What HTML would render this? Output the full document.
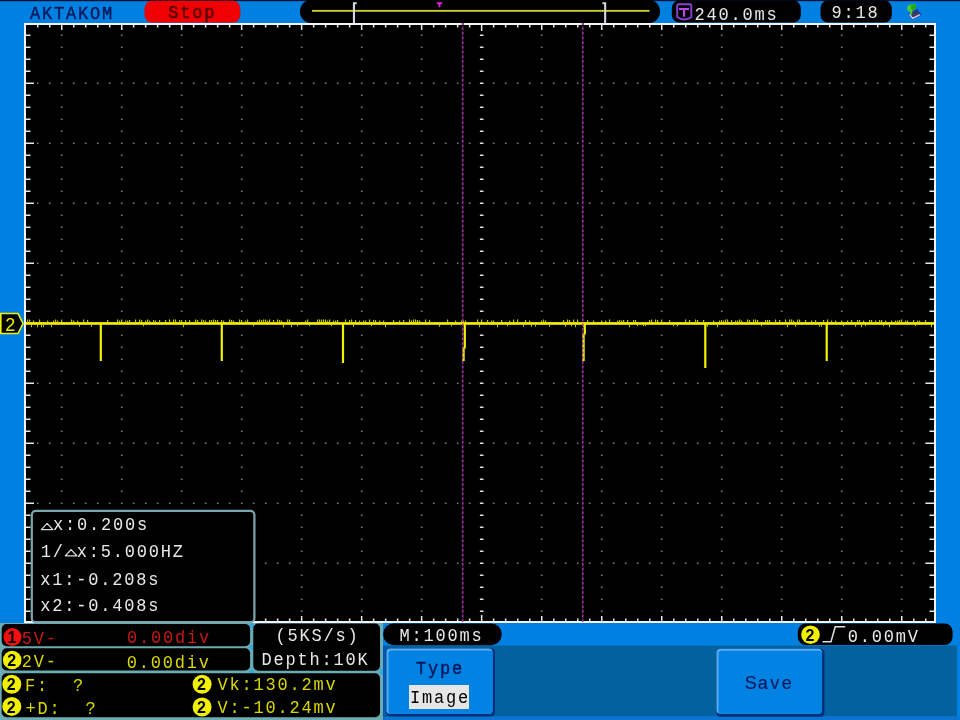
<!DOCTYPE html>
<html><head><meta charset="utf-8">
<style>
*{margin:0;padding:0;box-sizing:border-box}
html,body{width:960px;height:720px;overflow:hidden;background:#0080e0;}
body{position:relative;font-family:"Liberation Mono",monospace;}
.a{position:absolute}
.t{position:absolute;white-space:pre;font-family:"Liberation Mono",monospace;line-height:1;font-size:17px;letter-spacing:1.8px;transform:scaleY(1.08);transform-origin:0 50%}
.s{position:absolute;width:12px;text-align:center;font-family:"Liberation Sans",sans-serif;font-size:18px;line-height:20px;color:#001a5c;-webkit-text-stroke:0.15px #001a5c}
.c{position:absolute;width:20px;height:20px;line-height:20px;text-align:center;font-family:"Liberation Sans",sans-serif;font-size:16px;font-weight:bold;color:#000}
</style></head><body><div style="position:absolute;left:0;top:0;width:960px;height:720px;overflow:hidden;filter:blur(0.3px)">
<svg class="a" style="left:0;top:0" width="960" height="720" viewBox="0 0 960 720">
<rect x="0" y="0" width="960" height="1.2" fill="#001030"/>
<rect x="0" y="623" width="383" height="97" fill="#6aacb2"/>
<rect x="383" y="645.5" width="574" height="71" fill="#0262a0"/>
<rect x="383" y="716.5" width="577" height="3.5" fill="#0a74d0"/>
<rect x="24" y="23" width="912" height="600" fill="#f4f4f4"/>
<rect x="26" y="25" width="908" height="596" fill="#000"/>
<path d="M36.9 82.5h1.6v1.6h-1.6zM48.9 82.5h1.6v1.6h-1.6zM72.9 82.5h1.6v1.6h-1.6zM84.9 82.5h1.6v1.6h-1.6zM96.9 82.5h1.6v1.6h-1.6zM108.9 82.5h1.6v1.6h-1.6zM132.9 82.5h1.6v1.6h-1.6zM144.9 82.5h1.6v1.6h-1.6zM156.9 82.5h1.6v1.6h-1.6zM168.9 82.5h1.6v1.6h-1.6zM192.9 82.5h1.6v1.6h-1.6zM204.9 82.5h1.6v1.6h-1.6zM216.9 82.5h1.6v1.6h-1.6zM228.9 82.5h1.6v1.6h-1.6zM252.9 82.5h1.6v1.6h-1.6zM264.9 82.5h1.6v1.6h-1.6zM276.9 82.5h1.6v1.6h-1.6zM288.9 82.5h1.6v1.6h-1.6zM312.9 82.5h1.6v1.6h-1.6zM324.9 82.5h1.6v1.6h-1.6zM336.9 82.5h1.6v1.6h-1.6zM348.9 82.5h1.6v1.6h-1.6zM372.9 82.5h1.6v1.6h-1.6zM384.9 82.5h1.6v1.6h-1.6zM396.9 82.5h1.6v1.6h-1.6zM408.9 82.5h1.6v1.6h-1.6zM432.9 82.5h1.6v1.6h-1.6zM444.9 82.5h1.6v1.6h-1.6zM456.9 82.5h1.6v1.6h-1.6zM468.9 82.5h1.6v1.6h-1.6zM492.9 82.5h1.6v1.6h-1.6zM504.9 82.5h1.6v1.6h-1.6zM516.9 82.5h1.6v1.6h-1.6zM528.9 82.5h1.6v1.6h-1.6zM552.9 82.5h1.6v1.6h-1.6zM564.9 82.5h1.6v1.6h-1.6zM576.9 82.5h1.6v1.6h-1.6zM588.9 82.5h1.6v1.6h-1.6zM612.9 82.5h1.6v1.6h-1.6zM624.9 82.5h1.6v1.6h-1.6zM636.9 82.5h1.6v1.6h-1.6zM648.9 82.5h1.6v1.6h-1.6zM672.9 82.5h1.6v1.6h-1.6zM684.9 82.5h1.6v1.6h-1.6zM696.9 82.5h1.6v1.6h-1.6zM708.9 82.5h1.6v1.6h-1.6zM732.9 82.5h1.6v1.6h-1.6zM744.9 82.5h1.6v1.6h-1.6zM756.9 82.5h1.6v1.6h-1.6zM768.9 82.5h1.6v1.6h-1.6zM792.9 82.5h1.6v1.6h-1.6zM804.9 82.5h1.6v1.6h-1.6zM816.9 82.5h1.6v1.6h-1.6zM828.9 82.5h1.6v1.6h-1.6zM852.9 82.5h1.6v1.6h-1.6zM864.9 82.5h1.6v1.6h-1.6zM876.9 82.5h1.6v1.6h-1.6zM888.9 82.5h1.6v1.6h-1.6zM912.9 82.5h1.6v1.6h-1.6zM924.9 82.5h1.6v1.6h-1.6zM36.9 142.5h1.6v1.6h-1.6zM48.9 142.5h1.6v1.6h-1.6zM72.9 142.5h1.6v1.6h-1.6zM84.9 142.5h1.6v1.6h-1.6zM96.9 142.5h1.6v1.6h-1.6zM108.9 142.5h1.6v1.6h-1.6zM132.9 142.5h1.6v1.6h-1.6zM144.9 142.5h1.6v1.6h-1.6zM156.9 142.5h1.6v1.6h-1.6zM168.9 142.5h1.6v1.6h-1.6zM192.9 142.5h1.6v1.6h-1.6zM204.9 142.5h1.6v1.6h-1.6zM216.9 142.5h1.6v1.6h-1.6zM228.9 142.5h1.6v1.6h-1.6zM252.9 142.5h1.6v1.6h-1.6zM264.9 142.5h1.6v1.6h-1.6zM276.9 142.5h1.6v1.6h-1.6zM288.9 142.5h1.6v1.6h-1.6zM312.9 142.5h1.6v1.6h-1.6zM324.9 142.5h1.6v1.6h-1.6zM336.9 142.5h1.6v1.6h-1.6zM348.9 142.5h1.6v1.6h-1.6zM372.9 142.5h1.6v1.6h-1.6zM384.9 142.5h1.6v1.6h-1.6zM396.9 142.5h1.6v1.6h-1.6zM408.9 142.5h1.6v1.6h-1.6zM432.9 142.5h1.6v1.6h-1.6zM444.9 142.5h1.6v1.6h-1.6zM456.9 142.5h1.6v1.6h-1.6zM468.9 142.5h1.6v1.6h-1.6zM492.9 142.5h1.6v1.6h-1.6zM504.9 142.5h1.6v1.6h-1.6zM516.9 142.5h1.6v1.6h-1.6zM528.9 142.5h1.6v1.6h-1.6zM552.9 142.5h1.6v1.6h-1.6zM564.9 142.5h1.6v1.6h-1.6zM576.9 142.5h1.6v1.6h-1.6zM588.9 142.5h1.6v1.6h-1.6zM612.9 142.5h1.6v1.6h-1.6zM624.9 142.5h1.6v1.6h-1.6zM636.9 142.5h1.6v1.6h-1.6zM648.9 142.5h1.6v1.6h-1.6zM672.9 142.5h1.6v1.6h-1.6zM684.9 142.5h1.6v1.6h-1.6zM696.9 142.5h1.6v1.6h-1.6zM708.9 142.5h1.6v1.6h-1.6zM732.9 142.5h1.6v1.6h-1.6zM744.9 142.5h1.6v1.6h-1.6zM756.9 142.5h1.6v1.6h-1.6zM768.9 142.5h1.6v1.6h-1.6zM792.9 142.5h1.6v1.6h-1.6zM804.9 142.5h1.6v1.6h-1.6zM816.9 142.5h1.6v1.6h-1.6zM828.9 142.5h1.6v1.6h-1.6zM852.9 142.5h1.6v1.6h-1.6zM864.9 142.5h1.6v1.6h-1.6zM876.9 142.5h1.6v1.6h-1.6zM888.9 142.5h1.6v1.6h-1.6zM912.9 142.5h1.6v1.6h-1.6zM924.9 142.5h1.6v1.6h-1.6zM36.9 202.5h1.6v1.6h-1.6zM48.9 202.5h1.6v1.6h-1.6zM72.9 202.5h1.6v1.6h-1.6zM84.9 202.5h1.6v1.6h-1.6zM96.9 202.5h1.6v1.6h-1.6zM108.9 202.5h1.6v1.6h-1.6zM132.9 202.5h1.6v1.6h-1.6zM144.9 202.5h1.6v1.6h-1.6zM156.9 202.5h1.6v1.6h-1.6zM168.9 202.5h1.6v1.6h-1.6zM192.9 202.5h1.6v1.6h-1.6zM204.9 202.5h1.6v1.6h-1.6zM216.9 202.5h1.6v1.6h-1.6zM228.9 202.5h1.6v1.6h-1.6zM252.9 202.5h1.6v1.6h-1.6zM264.9 202.5h1.6v1.6h-1.6zM276.9 202.5h1.6v1.6h-1.6zM288.9 202.5h1.6v1.6h-1.6zM312.9 202.5h1.6v1.6h-1.6zM324.9 202.5h1.6v1.6h-1.6zM336.9 202.5h1.6v1.6h-1.6zM348.9 202.5h1.6v1.6h-1.6zM372.9 202.5h1.6v1.6h-1.6zM384.9 202.5h1.6v1.6h-1.6zM396.9 202.5h1.6v1.6h-1.6zM408.9 202.5h1.6v1.6h-1.6zM432.9 202.5h1.6v1.6h-1.6zM444.9 202.5h1.6v1.6h-1.6zM456.9 202.5h1.6v1.6h-1.6zM468.9 202.5h1.6v1.6h-1.6zM492.9 202.5h1.6v1.6h-1.6zM504.9 202.5h1.6v1.6h-1.6zM516.9 202.5h1.6v1.6h-1.6zM528.9 202.5h1.6v1.6h-1.6zM552.9 202.5h1.6v1.6h-1.6zM564.9 202.5h1.6v1.6h-1.6zM576.9 202.5h1.6v1.6h-1.6zM588.9 202.5h1.6v1.6h-1.6zM612.9 202.5h1.6v1.6h-1.6zM624.9 202.5h1.6v1.6h-1.6zM636.9 202.5h1.6v1.6h-1.6zM648.9 202.5h1.6v1.6h-1.6zM672.9 202.5h1.6v1.6h-1.6zM684.9 202.5h1.6v1.6h-1.6zM696.9 202.5h1.6v1.6h-1.6zM708.9 202.5h1.6v1.6h-1.6zM732.9 202.5h1.6v1.6h-1.6zM744.9 202.5h1.6v1.6h-1.6zM756.9 202.5h1.6v1.6h-1.6zM768.9 202.5h1.6v1.6h-1.6zM792.9 202.5h1.6v1.6h-1.6zM804.9 202.5h1.6v1.6h-1.6zM816.9 202.5h1.6v1.6h-1.6zM828.9 202.5h1.6v1.6h-1.6zM852.9 202.5h1.6v1.6h-1.6zM864.9 202.5h1.6v1.6h-1.6zM876.9 202.5h1.6v1.6h-1.6zM888.9 202.5h1.6v1.6h-1.6zM912.9 202.5h1.6v1.6h-1.6zM924.9 202.5h1.6v1.6h-1.6zM36.9 262.5h1.6v1.6h-1.6zM48.9 262.5h1.6v1.6h-1.6zM72.9 262.5h1.6v1.6h-1.6zM84.9 262.5h1.6v1.6h-1.6zM96.9 262.5h1.6v1.6h-1.6zM108.9 262.5h1.6v1.6h-1.6zM132.9 262.5h1.6v1.6h-1.6zM144.9 262.5h1.6v1.6h-1.6zM156.9 262.5h1.6v1.6h-1.6zM168.9 262.5h1.6v1.6h-1.6zM192.9 262.5h1.6v1.6h-1.6zM204.9 262.5h1.6v1.6h-1.6zM216.9 262.5h1.6v1.6h-1.6zM228.9 262.5h1.6v1.6h-1.6zM252.9 262.5h1.6v1.6h-1.6zM264.9 262.5h1.6v1.6h-1.6zM276.9 262.5h1.6v1.6h-1.6zM288.9 262.5h1.6v1.6h-1.6zM312.9 262.5h1.6v1.6h-1.6zM324.9 262.5h1.6v1.6h-1.6zM336.9 262.5h1.6v1.6h-1.6zM348.9 262.5h1.6v1.6h-1.6zM372.9 262.5h1.6v1.6h-1.6zM384.9 262.5h1.6v1.6h-1.6zM396.9 262.5h1.6v1.6h-1.6zM408.9 262.5h1.6v1.6h-1.6zM432.9 262.5h1.6v1.6h-1.6zM444.9 262.5h1.6v1.6h-1.6zM456.9 262.5h1.6v1.6h-1.6zM468.9 262.5h1.6v1.6h-1.6zM492.9 262.5h1.6v1.6h-1.6zM504.9 262.5h1.6v1.6h-1.6zM516.9 262.5h1.6v1.6h-1.6zM528.9 262.5h1.6v1.6h-1.6zM552.9 262.5h1.6v1.6h-1.6zM564.9 262.5h1.6v1.6h-1.6zM576.9 262.5h1.6v1.6h-1.6zM588.9 262.5h1.6v1.6h-1.6zM612.9 262.5h1.6v1.6h-1.6zM624.9 262.5h1.6v1.6h-1.6zM636.9 262.5h1.6v1.6h-1.6zM648.9 262.5h1.6v1.6h-1.6zM672.9 262.5h1.6v1.6h-1.6zM684.9 262.5h1.6v1.6h-1.6zM696.9 262.5h1.6v1.6h-1.6zM708.9 262.5h1.6v1.6h-1.6zM732.9 262.5h1.6v1.6h-1.6zM744.9 262.5h1.6v1.6h-1.6zM756.9 262.5h1.6v1.6h-1.6zM768.9 262.5h1.6v1.6h-1.6zM792.9 262.5h1.6v1.6h-1.6zM804.9 262.5h1.6v1.6h-1.6zM816.9 262.5h1.6v1.6h-1.6zM828.9 262.5h1.6v1.6h-1.6zM852.9 262.5h1.6v1.6h-1.6zM864.9 262.5h1.6v1.6h-1.6zM876.9 262.5h1.6v1.6h-1.6zM888.9 262.5h1.6v1.6h-1.6zM912.9 262.5h1.6v1.6h-1.6zM924.9 262.5h1.6v1.6h-1.6zM36.9 382.5h1.6v1.6h-1.6zM48.9 382.5h1.6v1.6h-1.6zM72.9 382.5h1.6v1.6h-1.6zM84.9 382.5h1.6v1.6h-1.6zM96.9 382.5h1.6v1.6h-1.6zM108.9 382.5h1.6v1.6h-1.6zM132.9 382.5h1.6v1.6h-1.6zM144.9 382.5h1.6v1.6h-1.6zM156.9 382.5h1.6v1.6h-1.6zM168.9 382.5h1.6v1.6h-1.6zM192.9 382.5h1.6v1.6h-1.6zM204.9 382.5h1.6v1.6h-1.6zM216.9 382.5h1.6v1.6h-1.6zM228.9 382.5h1.6v1.6h-1.6zM252.9 382.5h1.6v1.6h-1.6zM264.9 382.5h1.6v1.6h-1.6zM276.9 382.5h1.6v1.6h-1.6zM288.9 382.5h1.6v1.6h-1.6zM312.9 382.5h1.6v1.6h-1.6zM324.9 382.5h1.6v1.6h-1.6zM336.9 382.5h1.6v1.6h-1.6zM348.9 382.5h1.6v1.6h-1.6zM372.9 382.5h1.6v1.6h-1.6zM384.9 382.5h1.6v1.6h-1.6zM396.9 382.5h1.6v1.6h-1.6zM408.9 382.5h1.6v1.6h-1.6zM432.9 382.5h1.6v1.6h-1.6zM444.9 382.5h1.6v1.6h-1.6zM456.9 382.5h1.6v1.6h-1.6zM468.9 382.5h1.6v1.6h-1.6zM492.9 382.5h1.6v1.6h-1.6zM504.9 382.5h1.6v1.6h-1.6zM516.9 382.5h1.6v1.6h-1.6zM528.9 382.5h1.6v1.6h-1.6zM552.9 382.5h1.6v1.6h-1.6zM564.9 382.5h1.6v1.6h-1.6zM576.9 382.5h1.6v1.6h-1.6zM588.9 382.5h1.6v1.6h-1.6zM612.9 382.5h1.6v1.6h-1.6zM624.9 382.5h1.6v1.6h-1.6zM636.9 382.5h1.6v1.6h-1.6zM648.9 382.5h1.6v1.6h-1.6zM672.9 382.5h1.6v1.6h-1.6zM684.9 382.5h1.6v1.6h-1.6zM696.9 382.5h1.6v1.6h-1.6zM708.9 382.5h1.6v1.6h-1.6zM732.9 382.5h1.6v1.6h-1.6zM744.9 382.5h1.6v1.6h-1.6zM756.9 382.5h1.6v1.6h-1.6zM768.9 382.5h1.6v1.6h-1.6zM792.9 382.5h1.6v1.6h-1.6zM804.9 382.5h1.6v1.6h-1.6zM816.9 382.5h1.6v1.6h-1.6zM828.9 382.5h1.6v1.6h-1.6zM852.9 382.5h1.6v1.6h-1.6zM864.9 382.5h1.6v1.6h-1.6zM876.9 382.5h1.6v1.6h-1.6zM888.9 382.5h1.6v1.6h-1.6zM912.9 382.5h1.6v1.6h-1.6zM924.9 382.5h1.6v1.6h-1.6zM36.9 442.5h1.6v1.6h-1.6zM48.9 442.5h1.6v1.6h-1.6zM72.9 442.5h1.6v1.6h-1.6zM84.9 442.5h1.6v1.6h-1.6zM96.9 442.5h1.6v1.6h-1.6zM108.9 442.5h1.6v1.6h-1.6zM132.9 442.5h1.6v1.6h-1.6zM144.9 442.5h1.6v1.6h-1.6zM156.9 442.5h1.6v1.6h-1.6zM168.9 442.5h1.6v1.6h-1.6zM192.9 442.5h1.6v1.6h-1.6zM204.9 442.5h1.6v1.6h-1.6zM216.9 442.5h1.6v1.6h-1.6zM228.9 442.5h1.6v1.6h-1.6zM252.9 442.5h1.6v1.6h-1.6zM264.9 442.5h1.6v1.6h-1.6zM276.9 442.5h1.6v1.6h-1.6zM288.9 442.5h1.6v1.6h-1.6zM312.9 442.5h1.6v1.6h-1.6zM324.9 442.5h1.6v1.6h-1.6zM336.9 442.5h1.6v1.6h-1.6zM348.9 442.5h1.6v1.6h-1.6zM372.9 442.5h1.6v1.6h-1.6zM384.9 442.5h1.6v1.6h-1.6zM396.9 442.5h1.6v1.6h-1.6zM408.9 442.5h1.6v1.6h-1.6zM432.9 442.5h1.6v1.6h-1.6zM444.9 442.5h1.6v1.6h-1.6zM456.9 442.5h1.6v1.6h-1.6zM468.9 442.5h1.6v1.6h-1.6zM492.9 442.5h1.6v1.6h-1.6zM504.9 442.5h1.6v1.6h-1.6zM516.9 442.5h1.6v1.6h-1.6zM528.9 442.5h1.6v1.6h-1.6zM552.9 442.5h1.6v1.6h-1.6zM564.9 442.5h1.6v1.6h-1.6zM576.9 442.5h1.6v1.6h-1.6zM588.9 442.5h1.6v1.6h-1.6zM612.9 442.5h1.6v1.6h-1.6zM624.9 442.5h1.6v1.6h-1.6zM636.9 442.5h1.6v1.6h-1.6zM648.9 442.5h1.6v1.6h-1.6zM672.9 442.5h1.6v1.6h-1.6zM684.9 442.5h1.6v1.6h-1.6zM696.9 442.5h1.6v1.6h-1.6zM708.9 442.5h1.6v1.6h-1.6zM732.9 442.5h1.6v1.6h-1.6zM744.9 442.5h1.6v1.6h-1.6zM756.9 442.5h1.6v1.6h-1.6zM768.9 442.5h1.6v1.6h-1.6zM792.9 442.5h1.6v1.6h-1.6zM804.9 442.5h1.6v1.6h-1.6zM816.9 442.5h1.6v1.6h-1.6zM828.9 442.5h1.6v1.6h-1.6zM852.9 442.5h1.6v1.6h-1.6zM864.9 442.5h1.6v1.6h-1.6zM876.9 442.5h1.6v1.6h-1.6zM888.9 442.5h1.6v1.6h-1.6zM912.9 442.5h1.6v1.6h-1.6zM924.9 442.5h1.6v1.6h-1.6zM36.9 502.5h1.6v1.6h-1.6zM48.9 502.5h1.6v1.6h-1.6zM72.9 502.5h1.6v1.6h-1.6zM84.9 502.5h1.6v1.6h-1.6zM96.9 502.5h1.6v1.6h-1.6zM108.9 502.5h1.6v1.6h-1.6zM132.9 502.5h1.6v1.6h-1.6zM144.9 502.5h1.6v1.6h-1.6zM156.9 502.5h1.6v1.6h-1.6zM168.9 502.5h1.6v1.6h-1.6zM192.9 502.5h1.6v1.6h-1.6zM204.9 502.5h1.6v1.6h-1.6zM216.9 502.5h1.6v1.6h-1.6zM228.9 502.5h1.6v1.6h-1.6zM252.9 502.5h1.6v1.6h-1.6zM264.9 502.5h1.6v1.6h-1.6zM276.9 502.5h1.6v1.6h-1.6zM288.9 502.5h1.6v1.6h-1.6zM312.9 502.5h1.6v1.6h-1.6zM324.9 502.5h1.6v1.6h-1.6zM336.9 502.5h1.6v1.6h-1.6zM348.9 502.5h1.6v1.6h-1.6zM372.9 502.5h1.6v1.6h-1.6zM384.9 502.5h1.6v1.6h-1.6zM396.9 502.5h1.6v1.6h-1.6zM408.9 502.5h1.6v1.6h-1.6zM432.9 502.5h1.6v1.6h-1.6zM444.9 502.5h1.6v1.6h-1.6zM456.9 502.5h1.6v1.6h-1.6zM468.9 502.5h1.6v1.6h-1.6zM492.9 502.5h1.6v1.6h-1.6zM504.9 502.5h1.6v1.6h-1.6zM516.9 502.5h1.6v1.6h-1.6zM528.9 502.5h1.6v1.6h-1.6zM552.9 502.5h1.6v1.6h-1.6zM564.9 502.5h1.6v1.6h-1.6zM576.9 502.5h1.6v1.6h-1.6zM588.9 502.5h1.6v1.6h-1.6zM612.9 502.5h1.6v1.6h-1.6zM624.9 502.5h1.6v1.6h-1.6zM636.9 502.5h1.6v1.6h-1.6zM648.9 502.5h1.6v1.6h-1.6zM672.9 502.5h1.6v1.6h-1.6zM684.9 502.5h1.6v1.6h-1.6zM696.9 502.5h1.6v1.6h-1.6zM708.9 502.5h1.6v1.6h-1.6zM732.9 502.5h1.6v1.6h-1.6zM744.9 502.5h1.6v1.6h-1.6zM756.9 502.5h1.6v1.6h-1.6zM768.9 502.5h1.6v1.6h-1.6zM792.9 502.5h1.6v1.6h-1.6zM804.9 502.5h1.6v1.6h-1.6zM816.9 502.5h1.6v1.6h-1.6zM828.9 502.5h1.6v1.6h-1.6zM852.9 502.5h1.6v1.6h-1.6zM864.9 502.5h1.6v1.6h-1.6zM876.9 502.5h1.6v1.6h-1.6zM888.9 502.5h1.6v1.6h-1.6zM912.9 502.5h1.6v1.6h-1.6zM924.9 502.5h1.6v1.6h-1.6zM36.9 562.5h1.6v1.6h-1.6zM48.9 562.5h1.6v1.6h-1.6zM72.9 562.5h1.6v1.6h-1.6zM84.9 562.5h1.6v1.6h-1.6zM96.9 562.5h1.6v1.6h-1.6zM108.9 562.5h1.6v1.6h-1.6zM132.9 562.5h1.6v1.6h-1.6zM144.9 562.5h1.6v1.6h-1.6zM156.9 562.5h1.6v1.6h-1.6zM168.9 562.5h1.6v1.6h-1.6zM192.9 562.5h1.6v1.6h-1.6zM204.9 562.5h1.6v1.6h-1.6zM216.9 562.5h1.6v1.6h-1.6zM228.9 562.5h1.6v1.6h-1.6zM252.9 562.5h1.6v1.6h-1.6zM264.9 562.5h1.6v1.6h-1.6zM276.9 562.5h1.6v1.6h-1.6zM288.9 562.5h1.6v1.6h-1.6zM312.9 562.5h1.6v1.6h-1.6zM324.9 562.5h1.6v1.6h-1.6zM336.9 562.5h1.6v1.6h-1.6zM348.9 562.5h1.6v1.6h-1.6zM372.9 562.5h1.6v1.6h-1.6zM384.9 562.5h1.6v1.6h-1.6zM396.9 562.5h1.6v1.6h-1.6zM408.9 562.5h1.6v1.6h-1.6zM432.9 562.5h1.6v1.6h-1.6zM444.9 562.5h1.6v1.6h-1.6zM456.9 562.5h1.6v1.6h-1.6zM468.9 562.5h1.6v1.6h-1.6zM492.9 562.5h1.6v1.6h-1.6zM504.9 562.5h1.6v1.6h-1.6zM516.9 562.5h1.6v1.6h-1.6zM528.9 562.5h1.6v1.6h-1.6zM552.9 562.5h1.6v1.6h-1.6zM564.9 562.5h1.6v1.6h-1.6zM576.9 562.5h1.6v1.6h-1.6zM588.9 562.5h1.6v1.6h-1.6zM612.9 562.5h1.6v1.6h-1.6zM624.9 562.5h1.6v1.6h-1.6zM636.9 562.5h1.6v1.6h-1.6zM648.9 562.5h1.6v1.6h-1.6zM672.9 562.5h1.6v1.6h-1.6zM684.9 562.5h1.6v1.6h-1.6zM696.9 562.5h1.6v1.6h-1.6zM708.9 562.5h1.6v1.6h-1.6zM732.9 562.5h1.6v1.6h-1.6zM744.9 562.5h1.6v1.6h-1.6zM756.9 562.5h1.6v1.6h-1.6zM768.9 562.5h1.6v1.6h-1.6zM792.9 562.5h1.6v1.6h-1.6zM804.9 562.5h1.6v1.6h-1.6zM816.9 562.5h1.6v1.6h-1.6zM828.9 562.5h1.6v1.6h-1.6zM852.9 562.5h1.6v1.6h-1.6zM864.9 562.5h1.6v1.6h-1.6zM876.9 562.5h1.6v1.6h-1.6zM888.9 562.5h1.6v1.6h-1.6zM912.9 562.5h1.6v1.6h-1.6zM924.9 562.5h1.6v1.6h-1.6zM60.9 34.5h1.6v1.6h-1.6zM60.9 46.5h1.6v1.6h-1.6zM60.9 58.5h1.6v1.6h-1.6zM60.9 70.5h1.6v1.6h-1.6zM60.9 82.5h1.6v1.6h-1.6zM60.9 94.5h1.6v1.6h-1.6zM60.9 106.5h1.6v1.6h-1.6zM60.9 118.5h1.6v1.6h-1.6zM60.9 130.5h1.6v1.6h-1.6zM60.9 142.5h1.6v1.6h-1.6zM60.9 154.5h1.6v1.6h-1.6zM60.9 166.5h1.6v1.6h-1.6zM60.9 178.5h1.6v1.6h-1.6zM60.9 190.5h1.6v1.6h-1.6zM60.9 202.5h1.6v1.6h-1.6zM60.9 214.5h1.6v1.6h-1.6zM60.9 226.5h1.6v1.6h-1.6zM60.9 238.5h1.6v1.6h-1.6zM60.9 250.5h1.6v1.6h-1.6zM60.9 262.5h1.6v1.6h-1.6zM60.9 274.5h1.6v1.6h-1.6zM60.9 286.5h1.6v1.6h-1.6zM60.9 298.5h1.6v1.6h-1.6zM60.9 310.5h1.6v1.6h-1.6zM60.9 322.5h1.6v1.6h-1.6zM60.9 334.5h1.6v1.6h-1.6zM60.9 346.5h1.6v1.6h-1.6zM60.9 358.5h1.6v1.6h-1.6zM60.9 370.5h1.6v1.6h-1.6zM60.9 382.5h1.6v1.6h-1.6zM60.9 394.5h1.6v1.6h-1.6zM60.9 406.5h1.6v1.6h-1.6zM60.9 418.5h1.6v1.6h-1.6zM60.9 430.5h1.6v1.6h-1.6zM60.9 442.5h1.6v1.6h-1.6zM60.9 454.5h1.6v1.6h-1.6zM60.9 466.5h1.6v1.6h-1.6zM60.9 478.5h1.6v1.6h-1.6zM60.9 490.5h1.6v1.6h-1.6zM60.9 502.5h1.6v1.6h-1.6zM60.9 514.5h1.6v1.6h-1.6zM60.9 526.5h1.6v1.6h-1.6zM60.9 538.5h1.6v1.6h-1.6zM60.9 550.5h1.6v1.6h-1.6zM60.9 562.5h1.6v1.6h-1.6zM60.9 574.5h1.6v1.6h-1.6zM60.9 586.5h1.6v1.6h-1.6zM60.9 598.5h1.6v1.6h-1.6zM60.9 610.5h1.6v1.6h-1.6zM120.9 34.5h1.6v1.6h-1.6zM120.9 46.5h1.6v1.6h-1.6zM120.9 58.5h1.6v1.6h-1.6zM120.9 70.5h1.6v1.6h-1.6zM120.9 82.5h1.6v1.6h-1.6zM120.9 94.5h1.6v1.6h-1.6zM120.9 106.5h1.6v1.6h-1.6zM120.9 118.5h1.6v1.6h-1.6zM120.9 130.5h1.6v1.6h-1.6zM120.9 142.5h1.6v1.6h-1.6zM120.9 154.5h1.6v1.6h-1.6zM120.9 166.5h1.6v1.6h-1.6zM120.9 178.5h1.6v1.6h-1.6zM120.9 190.5h1.6v1.6h-1.6zM120.9 202.5h1.6v1.6h-1.6zM120.9 214.5h1.6v1.6h-1.6zM120.9 226.5h1.6v1.6h-1.6zM120.9 238.5h1.6v1.6h-1.6zM120.9 250.5h1.6v1.6h-1.6zM120.9 262.5h1.6v1.6h-1.6zM120.9 274.5h1.6v1.6h-1.6zM120.9 286.5h1.6v1.6h-1.6zM120.9 298.5h1.6v1.6h-1.6zM120.9 310.5h1.6v1.6h-1.6zM120.9 322.5h1.6v1.6h-1.6zM120.9 334.5h1.6v1.6h-1.6zM120.9 346.5h1.6v1.6h-1.6zM120.9 358.5h1.6v1.6h-1.6zM120.9 370.5h1.6v1.6h-1.6zM120.9 382.5h1.6v1.6h-1.6zM120.9 394.5h1.6v1.6h-1.6zM120.9 406.5h1.6v1.6h-1.6zM120.9 418.5h1.6v1.6h-1.6zM120.9 430.5h1.6v1.6h-1.6zM120.9 442.5h1.6v1.6h-1.6zM120.9 454.5h1.6v1.6h-1.6zM120.9 466.5h1.6v1.6h-1.6zM120.9 478.5h1.6v1.6h-1.6zM120.9 490.5h1.6v1.6h-1.6zM120.9 502.5h1.6v1.6h-1.6zM120.9 514.5h1.6v1.6h-1.6zM120.9 526.5h1.6v1.6h-1.6zM120.9 538.5h1.6v1.6h-1.6zM120.9 550.5h1.6v1.6h-1.6zM120.9 562.5h1.6v1.6h-1.6zM120.9 574.5h1.6v1.6h-1.6zM120.9 586.5h1.6v1.6h-1.6zM120.9 598.5h1.6v1.6h-1.6zM120.9 610.5h1.6v1.6h-1.6zM180.9 34.5h1.6v1.6h-1.6zM180.9 46.5h1.6v1.6h-1.6zM180.9 58.5h1.6v1.6h-1.6zM180.9 70.5h1.6v1.6h-1.6zM180.9 82.5h1.6v1.6h-1.6zM180.9 94.5h1.6v1.6h-1.6zM180.9 106.5h1.6v1.6h-1.6zM180.9 118.5h1.6v1.6h-1.6zM180.9 130.5h1.6v1.6h-1.6zM180.9 142.5h1.6v1.6h-1.6zM180.9 154.5h1.6v1.6h-1.6zM180.9 166.5h1.6v1.6h-1.6zM180.9 178.5h1.6v1.6h-1.6zM180.9 190.5h1.6v1.6h-1.6zM180.9 202.5h1.6v1.6h-1.6zM180.9 214.5h1.6v1.6h-1.6zM180.9 226.5h1.6v1.6h-1.6zM180.9 238.5h1.6v1.6h-1.6zM180.9 250.5h1.6v1.6h-1.6zM180.9 262.5h1.6v1.6h-1.6zM180.9 274.5h1.6v1.6h-1.6zM180.9 286.5h1.6v1.6h-1.6zM180.9 298.5h1.6v1.6h-1.6zM180.9 310.5h1.6v1.6h-1.6zM180.9 322.5h1.6v1.6h-1.6zM180.9 334.5h1.6v1.6h-1.6zM180.9 346.5h1.6v1.6h-1.6zM180.9 358.5h1.6v1.6h-1.6zM180.9 370.5h1.6v1.6h-1.6zM180.9 382.5h1.6v1.6h-1.6zM180.9 394.5h1.6v1.6h-1.6zM180.9 406.5h1.6v1.6h-1.6zM180.9 418.5h1.6v1.6h-1.6zM180.9 430.5h1.6v1.6h-1.6zM180.9 442.5h1.6v1.6h-1.6zM180.9 454.5h1.6v1.6h-1.6zM180.9 466.5h1.6v1.6h-1.6zM180.9 478.5h1.6v1.6h-1.6zM180.9 490.5h1.6v1.6h-1.6zM180.9 502.5h1.6v1.6h-1.6zM180.9 514.5h1.6v1.6h-1.6zM180.9 526.5h1.6v1.6h-1.6zM180.9 538.5h1.6v1.6h-1.6zM180.9 550.5h1.6v1.6h-1.6zM180.9 562.5h1.6v1.6h-1.6zM180.9 574.5h1.6v1.6h-1.6zM180.9 586.5h1.6v1.6h-1.6zM180.9 598.5h1.6v1.6h-1.6zM180.9 610.5h1.6v1.6h-1.6zM240.9 34.5h1.6v1.6h-1.6zM240.9 46.5h1.6v1.6h-1.6zM240.9 58.5h1.6v1.6h-1.6zM240.9 70.5h1.6v1.6h-1.6zM240.9 82.5h1.6v1.6h-1.6zM240.9 94.5h1.6v1.6h-1.6zM240.9 106.5h1.6v1.6h-1.6zM240.9 118.5h1.6v1.6h-1.6zM240.9 130.5h1.6v1.6h-1.6zM240.9 142.5h1.6v1.6h-1.6zM240.9 154.5h1.6v1.6h-1.6zM240.9 166.5h1.6v1.6h-1.6zM240.9 178.5h1.6v1.6h-1.6zM240.9 190.5h1.6v1.6h-1.6zM240.9 202.5h1.6v1.6h-1.6zM240.9 214.5h1.6v1.6h-1.6zM240.9 226.5h1.6v1.6h-1.6zM240.9 238.5h1.6v1.6h-1.6zM240.9 250.5h1.6v1.6h-1.6zM240.9 262.5h1.6v1.6h-1.6zM240.9 274.5h1.6v1.6h-1.6zM240.9 286.5h1.6v1.6h-1.6zM240.9 298.5h1.6v1.6h-1.6zM240.9 310.5h1.6v1.6h-1.6zM240.9 322.5h1.6v1.6h-1.6zM240.9 334.5h1.6v1.6h-1.6zM240.9 346.5h1.6v1.6h-1.6zM240.9 358.5h1.6v1.6h-1.6zM240.9 370.5h1.6v1.6h-1.6zM240.9 382.5h1.6v1.6h-1.6zM240.9 394.5h1.6v1.6h-1.6zM240.9 406.5h1.6v1.6h-1.6zM240.9 418.5h1.6v1.6h-1.6zM240.9 430.5h1.6v1.6h-1.6zM240.9 442.5h1.6v1.6h-1.6zM240.9 454.5h1.6v1.6h-1.6zM240.9 466.5h1.6v1.6h-1.6zM240.9 478.5h1.6v1.6h-1.6zM240.9 490.5h1.6v1.6h-1.6zM240.9 502.5h1.6v1.6h-1.6zM240.9 514.5h1.6v1.6h-1.6zM240.9 526.5h1.6v1.6h-1.6zM240.9 538.5h1.6v1.6h-1.6zM240.9 550.5h1.6v1.6h-1.6zM240.9 562.5h1.6v1.6h-1.6zM240.9 574.5h1.6v1.6h-1.6zM240.9 586.5h1.6v1.6h-1.6zM240.9 598.5h1.6v1.6h-1.6zM240.9 610.5h1.6v1.6h-1.6zM300.9 34.5h1.6v1.6h-1.6zM300.9 46.5h1.6v1.6h-1.6zM300.9 58.5h1.6v1.6h-1.6zM300.9 70.5h1.6v1.6h-1.6zM300.9 82.5h1.6v1.6h-1.6zM300.9 94.5h1.6v1.6h-1.6zM300.9 106.5h1.6v1.6h-1.6zM300.9 118.5h1.6v1.6h-1.6zM300.9 130.5h1.6v1.6h-1.6zM300.9 142.5h1.6v1.6h-1.6zM300.9 154.5h1.6v1.6h-1.6zM300.9 166.5h1.6v1.6h-1.6zM300.9 178.5h1.6v1.6h-1.6zM300.9 190.5h1.6v1.6h-1.6zM300.9 202.5h1.6v1.6h-1.6zM300.9 214.5h1.6v1.6h-1.6zM300.9 226.5h1.6v1.6h-1.6zM300.9 238.5h1.6v1.6h-1.6zM300.9 250.5h1.6v1.6h-1.6zM300.9 262.5h1.6v1.6h-1.6zM300.9 274.5h1.6v1.6h-1.6zM300.9 286.5h1.6v1.6h-1.6zM300.9 298.5h1.6v1.6h-1.6zM300.9 310.5h1.6v1.6h-1.6zM300.9 322.5h1.6v1.6h-1.6zM300.9 334.5h1.6v1.6h-1.6zM300.9 346.5h1.6v1.6h-1.6zM300.9 358.5h1.6v1.6h-1.6zM300.9 370.5h1.6v1.6h-1.6zM300.9 382.5h1.6v1.6h-1.6zM300.9 394.5h1.6v1.6h-1.6zM300.9 406.5h1.6v1.6h-1.6zM300.9 418.5h1.6v1.6h-1.6zM300.9 430.5h1.6v1.6h-1.6zM300.9 442.5h1.6v1.6h-1.6zM300.9 454.5h1.6v1.6h-1.6zM300.9 466.5h1.6v1.6h-1.6zM300.9 478.5h1.6v1.6h-1.6zM300.9 490.5h1.6v1.6h-1.6zM300.9 502.5h1.6v1.6h-1.6zM300.9 514.5h1.6v1.6h-1.6zM300.9 526.5h1.6v1.6h-1.6zM300.9 538.5h1.6v1.6h-1.6zM300.9 550.5h1.6v1.6h-1.6zM300.9 562.5h1.6v1.6h-1.6zM300.9 574.5h1.6v1.6h-1.6zM300.9 586.5h1.6v1.6h-1.6zM300.9 598.5h1.6v1.6h-1.6zM300.9 610.5h1.6v1.6h-1.6zM360.9 34.5h1.6v1.6h-1.6zM360.9 46.5h1.6v1.6h-1.6zM360.9 58.5h1.6v1.6h-1.6zM360.9 70.5h1.6v1.6h-1.6zM360.9 82.5h1.6v1.6h-1.6zM360.9 94.5h1.6v1.6h-1.6zM360.9 106.5h1.6v1.6h-1.6zM360.9 118.5h1.6v1.6h-1.6zM360.9 130.5h1.6v1.6h-1.6zM360.9 142.5h1.6v1.6h-1.6zM360.9 154.5h1.6v1.6h-1.6zM360.9 166.5h1.6v1.6h-1.6zM360.9 178.5h1.6v1.6h-1.6zM360.9 190.5h1.6v1.6h-1.6zM360.9 202.5h1.6v1.6h-1.6zM360.9 214.5h1.6v1.6h-1.6zM360.9 226.5h1.6v1.6h-1.6zM360.9 238.5h1.6v1.6h-1.6zM360.9 250.5h1.6v1.6h-1.6zM360.9 262.5h1.6v1.6h-1.6zM360.9 274.5h1.6v1.6h-1.6zM360.9 286.5h1.6v1.6h-1.6zM360.9 298.5h1.6v1.6h-1.6zM360.9 310.5h1.6v1.6h-1.6zM360.9 322.5h1.6v1.6h-1.6zM360.9 334.5h1.6v1.6h-1.6zM360.9 346.5h1.6v1.6h-1.6zM360.9 358.5h1.6v1.6h-1.6zM360.9 370.5h1.6v1.6h-1.6zM360.9 382.5h1.6v1.6h-1.6zM360.9 394.5h1.6v1.6h-1.6zM360.9 406.5h1.6v1.6h-1.6zM360.9 418.5h1.6v1.6h-1.6zM360.9 430.5h1.6v1.6h-1.6zM360.9 442.5h1.6v1.6h-1.6zM360.9 454.5h1.6v1.6h-1.6zM360.9 466.5h1.6v1.6h-1.6zM360.9 478.5h1.6v1.6h-1.6zM360.9 490.5h1.6v1.6h-1.6zM360.9 502.5h1.6v1.6h-1.6zM360.9 514.5h1.6v1.6h-1.6zM360.9 526.5h1.6v1.6h-1.6zM360.9 538.5h1.6v1.6h-1.6zM360.9 550.5h1.6v1.6h-1.6zM360.9 562.5h1.6v1.6h-1.6zM360.9 574.5h1.6v1.6h-1.6zM360.9 586.5h1.6v1.6h-1.6zM360.9 598.5h1.6v1.6h-1.6zM360.9 610.5h1.6v1.6h-1.6zM420.9 34.5h1.6v1.6h-1.6zM420.9 46.5h1.6v1.6h-1.6zM420.9 58.5h1.6v1.6h-1.6zM420.9 70.5h1.6v1.6h-1.6zM420.9 82.5h1.6v1.6h-1.6zM420.9 94.5h1.6v1.6h-1.6zM420.9 106.5h1.6v1.6h-1.6zM420.9 118.5h1.6v1.6h-1.6zM420.9 130.5h1.6v1.6h-1.6zM420.9 142.5h1.6v1.6h-1.6zM420.9 154.5h1.6v1.6h-1.6zM420.9 166.5h1.6v1.6h-1.6zM420.9 178.5h1.6v1.6h-1.6zM420.9 190.5h1.6v1.6h-1.6zM420.9 202.5h1.6v1.6h-1.6zM420.9 214.5h1.6v1.6h-1.6zM420.9 226.5h1.6v1.6h-1.6zM420.9 238.5h1.6v1.6h-1.6zM420.9 250.5h1.6v1.6h-1.6zM420.9 262.5h1.6v1.6h-1.6zM420.9 274.5h1.6v1.6h-1.6zM420.9 286.5h1.6v1.6h-1.6zM420.9 298.5h1.6v1.6h-1.6zM420.9 310.5h1.6v1.6h-1.6zM420.9 322.5h1.6v1.6h-1.6zM420.9 334.5h1.6v1.6h-1.6zM420.9 346.5h1.6v1.6h-1.6zM420.9 358.5h1.6v1.6h-1.6zM420.9 370.5h1.6v1.6h-1.6zM420.9 382.5h1.6v1.6h-1.6zM420.9 394.5h1.6v1.6h-1.6zM420.9 406.5h1.6v1.6h-1.6zM420.9 418.5h1.6v1.6h-1.6zM420.9 430.5h1.6v1.6h-1.6zM420.9 442.5h1.6v1.6h-1.6zM420.9 454.5h1.6v1.6h-1.6zM420.9 466.5h1.6v1.6h-1.6zM420.9 478.5h1.6v1.6h-1.6zM420.9 490.5h1.6v1.6h-1.6zM420.9 502.5h1.6v1.6h-1.6zM420.9 514.5h1.6v1.6h-1.6zM420.9 526.5h1.6v1.6h-1.6zM420.9 538.5h1.6v1.6h-1.6zM420.9 550.5h1.6v1.6h-1.6zM420.9 562.5h1.6v1.6h-1.6zM420.9 574.5h1.6v1.6h-1.6zM420.9 586.5h1.6v1.6h-1.6zM420.9 598.5h1.6v1.6h-1.6zM420.9 610.5h1.6v1.6h-1.6zM540.9 34.5h1.6v1.6h-1.6zM540.9 46.5h1.6v1.6h-1.6zM540.9 58.5h1.6v1.6h-1.6zM540.9 70.5h1.6v1.6h-1.6zM540.9 82.5h1.6v1.6h-1.6zM540.9 94.5h1.6v1.6h-1.6zM540.9 106.5h1.6v1.6h-1.6zM540.9 118.5h1.6v1.6h-1.6zM540.9 130.5h1.6v1.6h-1.6zM540.9 142.5h1.6v1.6h-1.6zM540.9 154.5h1.6v1.6h-1.6zM540.9 166.5h1.6v1.6h-1.6zM540.9 178.5h1.6v1.6h-1.6zM540.9 190.5h1.6v1.6h-1.6zM540.9 202.5h1.6v1.6h-1.6zM540.9 214.5h1.6v1.6h-1.6zM540.9 226.5h1.6v1.6h-1.6zM540.9 238.5h1.6v1.6h-1.6zM540.9 250.5h1.6v1.6h-1.6zM540.9 262.5h1.6v1.6h-1.6zM540.9 274.5h1.6v1.6h-1.6zM540.9 286.5h1.6v1.6h-1.6zM540.9 298.5h1.6v1.6h-1.6zM540.9 310.5h1.6v1.6h-1.6zM540.9 322.5h1.6v1.6h-1.6zM540.9 334.5h1.6v1.6h-1.6zM540.9 346.5h1.6v1.6h-1.6zM540.9 358.5h1.6v1.6h-1.6zM540.9 370.5h1.6v1.6h-1.6zM540.9 382.5h1.6v1.6h-1.6zM540.9 394.5h1.6v1.6h-1.6zM540.9 406.5h1.6v1.6h-1.6zM540.9 418.5h1.6v1.6h-1.6zM540.9 430.5h1.6v1.6h-1.6zM540.9 442.5h1.6v1.6h-1.6zM540.9 454.5h1.6v1.6h-1.6zM540.9 466.5h1.6v1.6h-1.6zM540.9 478.5h1.6v1.6h-1.6zM540.9 490.5h1.6v1.6h-1.6zM540.9 502.5h1.6v1.6h-1.6zM540.9 514.5h1.6v1.6h-1.6zM540.9 526.5h1.6v1.6h-1.6zM540.9 538.5h1.6v1.6h-1.6zM540.9 550.5h1.6v1.6h-1.6zM540.9 562.5h1.6v1.6h-1.6zM540.9 574.5h1.6v1.6h-1.6zM540.9 586.5h1.6v1.6h-1.6zM540.9 598.5h1.6v1.6h-1.6zM540.9 610.5h1.6v1.6h-1.6zM600.9 34.5h1.6v1.6h-1.6zM600.9 46.5h1.6v1.6h-1.6zM600.9 58.5h1.6v1.6h-1.6zM600.9 70.5h1.6v1.6h-1.6zM600.9 82.5h1.6v1.6h-1.6zM600.9 94.5h1.6v1.6h-1.6zM600.9 106.5h1.6v1.6h-1.6zM600.9 118.5h1.6v1.6h-1.6zM600.9 130.5h1.6v1.6h-1.6zM600.9 142.5h1.6v1.6h-1.6zM600.9 154.5h1.6v1.6h-1.6zM600.9 166.5h1.6v1.6h-1.6zM600.9 178.5h1.6v1.6h-1.6zM600.9 190.5h1.6v1.6h-1.6zM600.9 202.5h1.6v1.6h-1.6zM600.9 214.5h1.6v1.6h-1.6zM600.9 226.5h1.6v1.6h-1.6zM600.9 238.5h1.6v1.6h-1.6zM600.9 250.5h1.6v1.6h-1.6zM600.9 262.5h1.6v1.6h-1.6zM600.9 274.5h1.6v1.6h-1.6zM600.9 286.5h1.6v1.6h-1.6zM600.9 298.5h1.6v1.6h-1.6zM600.9 310.5h1.6v1.6h-1.6zM600.9 322.5h1.6v1.6h-1.6zM600.9 334.5h1.6v1.6h-1.6zM600.9 346.5h1.6v1.6h-1.6zM600.9 358.5h1.6v1.6h-1.6zM600.9 370.5h1.6v1.6h-1.6zM600.9 382.5h1.6v1.6h-1.6zM600.9 394.5h1.6v1.6h-1.6zM600.9 406.5h1.6v1.6h-1.6zM600.9 418.5h1.6v1.6h-1.6zM600.9 430.5h1.6v1.6h-1.6zM600.9 442.5h1.6v1.6h-1.6zM600.9 454.5h1.6v1.6h-1.6zM600.9 466.5h1.6v1.6h-1.6zM600.9 478.5h1.6v1.6h-1.6zM600.9 490.5h1.6v1.6h-1.6zM600.9 502.5h1.6v1.6h-1.6zM600.9 514.5h1.6v1.6h-1.6zM600.9 526.5h1.6v1.6h-1.6zM600.9 538.5h1.6v1.6h-1.6zM600.9 550.5h1.6v1.6h-1.6zM600.9 562.5h1.6v1.6h-1.6zM600.9 574.5h1.6v1.6h-1.6zM600.9 586.5h1.6v1.6h-1.6zM600.9 598.5h1.6v1.6h-1.6zM600.9 610.5h1.6v1.6h-1.6zM660.9 34.5h1.6v1.6h-1.6zM660.9 46.5h1.6v1.6h-1.6zM660.9 58.5h1.6v1.6h-1.6zM660.9 70.5h1.6v1.6h-1.6zM660.9 82.5h1.6v1.6h-1.6zM660.9 94.5h1.6v1.6h-1.6zM660.9 106.5h1.6v1.6h-1.6zM660.9 118.5h1.6v1.6h-1.6zM660.9 130.5h1.6v1.6h-1.6zM660.9 142.5h1.6v1.6h-1.6zM660.9 154.5h1.6v1.6h-1.6zM660.9 166.5h1.6v1.6h-1.6zM660.9 178.5h1.6v1.6h-1.6zM660.9 190.5h1.6v1.6h-1.6zM660.9 202.5h1.6v1.6h-1.6zM660.9 214.5h1.6v1.6h-1.6zM660.9 226.5h1.6v1.6h-1.6zM660.9 238.5h1.6v1.6h-1.6zM660.9 250.5h1.6v1.6h-1.6zM660.9 262.5h1.6v1.6h-1.6zM660.9 274.5h1.6v1.6h-1.6zM660.9 286.5h1.6v1.6h-1.6zM660.9 298.5h1.6v1.6h-1.6zM660.9 310.5h1.6v1.6h-1.6zM660.9 322.5h1.6v1.6h-1.6zM660.9 334.5h1.6v1.6h-1.6zM660.9 346.5h1.6v1.6h-1.6zM660.9 358.5h1.6v1.6h-1.6zM660.9 370.5h1.6v1.6h-1.6zM660.9 382.5h1.6v1.6h-1.6zM660.9 394.5h1.6v1.6h-1.6zM660.9 406.5h1.6v1.6h-1.6zM660.9 418.5h1.6v1.6h-1.6zM660.9 430.5h1.6v1.6h-1.6zM660.9 442.5h1.6v1.6h-1.6zM660.9 454.5h1.6v1.6h-1.6zM660.9 466.5h1.6v1.6h-1.6zM660.9 478.5h1.6v1.6h-1.6zM660.9 490.5h1.6v1.6h-1.6zM660.9 502.5h1.6v1.6h-1.6zM660.9 514.5h1.6v1.6h-1.6zM660.9 526.5h1.6v1.6h-1.6zM660.9 538.5h1.6v1.6h-1.6zM660.9 550.5h1.6v1.6h-1.6zM660.9 562.5h1.6v1.6h-1.6zM660.9 574.5h1.6v1.6h-1.6zM660.9 586.5h1.6v1.6h-1.6zM660.9 598.5h1.6v1.6h-1.6zM660.9 610.5h1.6v1.6h-1.6zM720.9 34.5h1.6v1.6h-1.6zM720.9 46.5h1.6v1.6h-1.6zM720.9 58.5h1.6v1.6h-1.6zM720.9 70.5h1.6v1.6h-1.6zM720.9 82.5h1.6v1.6h-1.6zM720.9 94.5h1.6v1.6h-1.6zM720.9 106.5h1.6v1.6h-1.6zM720.9 118.5h1.6v1.6h-1.6zM720.9 130.5h1.6v1.6h-1.6zM720.9 142.5h1.6v1.6h-1.6zM720.9 154.5h1.6v1.6h-1.6zM720.9 166.5h1.6v1.6h-1.6zM720.9 178.5h1.6v1.6h-1.6zM720.9 190.5h1.6v1.6h-1.6zM720.9 202.5h1.6v1.6h-1.6zM720.9 214.5h1.6v1.6h-1.6zM720.9 226.5h1.6v1.6h-1.6zM720.9 238.5h1.6v1.6h-1.6zM720.9 250.5h1.6v1.6h-1.6zM720.9 262.5h1.6v1.6h-1.6zM720.9 274.5h1.6v1.6h-1.6zM720.9 286.5h1.6v1.6h-1.6zM720.9 298.5h1.6v1.6h-1.6zM720.9 310.5h1.6v1.6h-1.6zM720.9 322.5h1.6v1.6h-1.6zM720.9 334.5h1.6v1.6h-1.6zM720.9 346.5h1.6v1.6h-1.6zM720.9 358.5h1.6v1.6h-1.6zM720.9 370.5h1.6v1.6h-1.6zM720.9 382.5h1.6v1.6h-1.6zM720.9 394.5h1.6v1.6h-1.6zM720.9 406.5h1.6v1.6h-1.6zM720.9 418.5h1.6v1.6h-1.6zM720.9 430.5h1.6v1.6h-1.6zM720.9 442.5h1.6v1.6h-1.6zM720.9 454.5h1.6v1.6h-1.6zM720.9 466.5h1.6v1.6h-1.6zM720.9 478.5h1.6v1.6h-1.6zM720.9 490.5h1.6v1.6h-1.6zM720.9 502.5h1.6v1.6h-1.6zM720.9 514.5h1.6v1.6h-1.6zM720.9 526.5h1.6v1.6h-1.6zM720.9 538.5h1.6v1.6h-1.6zM720.9 550.5h1.6v1.6h-1.6zM720.9 562.5h1.6v1.6h-1.6zM720.9 574.5h1.6v1.6h-1.6zM720.9 586.5h1.6v1.6h-1.6zM720.9 598.5h1.6v1.6h-1.6zM720.9 610.5h1.6v1.6h-1.6zM780.9 34.5h1.6v1.6h-1.6zM780.9 46.5h1.6v1.6h-1.6zM780.9 58.5h1.6v1.6h-1.6zM780.9 70.5h1.6v1.6h-1.6zM780.9 82.5h1.6v1.6h-1.6zM780.9 94.5h1.6v1.6h-1.6zM780.9 106.5h1.6v1.6h-1.6zM780.9 118.5h1.6v1.6h-1.6zM780.9 130.5h1.6v1.6h-1.6zM780.9 142.5h1.6v1.6h-1.6zM780.9 154.5h1.6v1.6h-1.6zM780.9 166.5h1.6v1.6h-1.6zM780.9 178.5h1.6v1.6h-1.6zM780.9 190.5h1.6v1.6h-1.6zM780.9 202.5h1.6v1.6h-1.6zM780.9 214.5h1.6v1.6h-1.6zM780.9 226.5h1.6v1.6h-1.6zM780.9 238.5h1.6v1.6h-1.6zM780.9 250.5h1.6v1.6h-1.6zM780.9 262.5h1.6v1.6h-1.6zM780.9 274.5h1.6v1.6h-1.6zM780.9 286.5h1.6v1.6h-1.6zM780.9 298.5h1.6v1.6h-1.6zM780.9 310.5h1.6v1.6h-1.6zM780.9 322.5h1.6v1.6h-1.6zM780.9 334.5h1.6v1.6h-1.6zM780.9 346.5h1.6v1.6h-1.6zM780.9 358.5h1.6v1.6h-1.6zM780.9 370.5h1.6v1.6h-1.6zM780.9 382.5h1.6v1.6h-1.6zM780.9 394.5h1.6v1.6h-1.6zM780.9 406.5h1.6v1.6h-1.6zM780.9 418.5h1.6v1.6h-1.6zM780.9 430.5h1.6v1.6h-1.6zM780.9 442.5h1.6v1.6h-1.6zM780.9 454.5h1.6v1.6h-1.6zM780.9 466.5h1.6v1.6h-1.6zM780.9 478.5h1.6v1.6h-1.6zM780.9 490.5h1.6v1.6h-1.6zM780.9 502.5h1.6v1.6h-1.6zM780.9 514.5h1.6v1.6h-1.6zM780.9 526.5h1.6v1.6h-1.6zM780.9 538.5h1.6v1.6h-1.6zM780.9 550.5h1.6v1.6h-1.6zM780.9 562.5h1.6v1.6h-1.6zM780.9 574.5h1.6v1.6h-1.6zM780.9 586.5h1.6v1.6h-1.6zM780.9 598.5h1.6v1.6h-1.6zM780.9 610.5h1.6v1.6h-1.6zM840.9 34.5h1.6v1.6h-1.6zM840.9 46.5h1.6v1.6h-1.6zM840.9 58.5h1.6v1.6h-1.6zM840.9 70.5h1.6v1.6h-1.6zM840.9 82.5h1.6v1.6h-1.6zM840.9 94.5h1.6v1.6h-1.6zM840.9 106.5h1.6v1.6h-1.6zM840.9 118.5h1.6v1.6h-1.6zM840.9 130.5h1.6v1.6h-1.6zM840.9 142.5h1.6v1.6h-1.6zM840.9 154.5h1.6v1.6h-1.6zM840.9 166.5h1.6v1.6h-1.6zM840.9 178.5h1.6v1.6h-1.6zM840.9 190.5h1.6v1.6h-1.6zM840.9 202.5h1.6v1.6h-1.6zM840.9 214.5h1.6v1.6h-1.6zM840.9 226.5h1.6v1.6h-1.6zM840.9 238.5h1.6v1.6h-1.6zM840.9 250.5h1.6v1.6h-1.6zM840.9 262.5h1.6v1.6h-1.6zM840.9 274.5h1.6v1.6h-1.6zM840.9 286.5h1.6v1.6h-1.6zM840.9 298.5h1.6v1.6h-1.6zM840.9 310.5h1.6v1.6h-1.6zM840.9 322.5h1.6v1.6h-1.6zM840.9 334.5h1.6v1.6h-1.6zM840.9 346.5h1.6v1.6h-1.6zM840.9 358.5h1.6v1.6h-1.6zM840.9 370.5h1.6v1.6h-1.6zM840.9 382.5h1.6v1.6h-1.6zM840.9 394.5h1.6v1.6h-1.6zM840.9 406.5h1.6v1.6h-1.6zM840.9 418.5h1.6v1.6h-1.6zM840.9 430.5h1.6v1.6h-1.6zM840.9 442.5h1.6v1.6h-1.6zM840.9 454.5h1.6v1.6h-1.6zM840.9 466.5h1.6v1.6h-1.6zM840.9 478.5h1.6v1.6h-1.6zM840.9 490.5h1.6v1.6h-1.6zM840.9 502.5h1.6v1.6h-1.6zM840.9 514.5h1.6v1.6h-1.6zM840.9 526.5h1.6v1.6h-1.6zM840.9 538.5h1.6v1.6h-1.6zM840.9 550.5h1.6v1.6h-1.6zM840.9 562.5h1.6v1.6h-1.6zM840.9 574.5h1.6v1.6h-1.6zM840.9 586.5h1.6v1.6h-1.6zM840.9 598.5h1.6v1.6h-1.6zM840.9 610.5h1.6v1.6h-1.6zM900.9 34.5h1.6v1.6h-1.6zM900.9 46.5h1.6v1.6h-1.6zM900.9 58.5h1.6v1.6h-1.6zM900.9 70.5h1.6v1.6h-1.6zM900.9 82.5h1.6v1.6h-1.6zM900.9 94.5h1.6v1.6h-1.6zM900.9 106.5h1.6v1.6h-1.6zM900.9 118.5h1.6v1.6h-1.6zM900.9 130.5h1.6v1.6h-1.6zM900.9 142.5h1.6v1.6h-1.6zM900.9 154.5h1.6v1.6h-1.6zM900.9 166.5h1.6v1.6h-1.6zM900.9 178.5h1.6v1.6h-1.6zM900.9 190.5h1.6v1.6h-1.6zM900.9 202.5h1.6v1.6h-1.6zM900.9 214.5h1.6v1.6h-1.6zM900.9 226.5h1.6v1.6h-1.6zM900.9 238.5h1.6v1.6h-1.6zM900.9 250.5h1.6v1.6h-1.6zM900.9 262.5h1.6v1.6h-1.6zM900.9 274.5h1.6v1.6h-1.6zM900.9 286.5h1.6v1.6h-1.6zM900.9 298.5h1.6v1.6h-1.6zM900.9 310.5h1.6v1.6h-1.6zM900.9 322.5h1.6v1.6h-1.6zM900.9 334.5h1.6v1.6h-1.6zM900.9 346.5h1.6v1.6h-1.6zM900.9 358.5h1.6v1.6h-1.6zM900.9 370.5h1.6v1.6h-1.6zM900.9 382.5h1.6v1.6h-1.6zM900.9 394.5h1.6v1.6h-1.6zM900.9 406.5h1.6v1.6h-1.6zM900.9 418.5h1.6v1.6h-1.6zM900.9 430.5h1.6v1.6h-1.6zM900.9 442.5h1.6v1.6h-1.6zM900.9 454.5h1.6v1.6h-1.6zM900.9 466.5h1.6v1.6h-1.6zM900.9 478.5h1.6v1.6h-1.6zM900.9 490.5h1.6v1.6h-1.6zM900.9 502.5h1.6v1.6h-1.6zM900.9 514.5h1.6v1.6h-1.6zM900.9 526.5h1.6v1.6h-1.6zM900.9 538.5h1.6v1.6h-1.6zM900.9 550.5h1.6v1.6h-1.6zM900.9 562.5h1.6v1.6h-1.6zM900.9 574.5h1.6v1.6h-1.6zM900.9 586.5h1.6v1.6h-1.6zM900.9 598.5h1.6v1.6h-1.6zM900.9 610.5h1.6v1.6h-1.6z" fill="#7a7a7a"/>
<path d="M479.9 34.5h3.6v1.6h-3.6zM479.9 46.5h3.6v1.6h-3.6zM479.9 58.5h3.6v1.6h-3.6zM479.9 70.5h3.6v1.6h-3.6zM479.9 82.5h3.6v1.6h-3.6zM479.9 94.5h3.6v1.6h-3.6zM479.9 106.5h3.6v1.6h-3.6zM479.9 118.5h3.6v1.6h-3.6zM479.9 130.5h3.6v1.6h-3.6zM479.9 142.5h3.6v1.6h-3.6zM479.9 154.5h3.6v1.6h-3.6zM479.9 166.5h3.6v1.6h-3.6zM479.9 178.5h3.6v1.6h-3.6zM479.9 190.5h3.6v1.6h-3.6zM479.9 202.5h3.6v1.6h-3.6zM479.9 214.5h3.6v1.6h-3.6zM479.9 226.5h3.6v1.6h-3.6zM479.9 238.5h3.6v1.6h-3.6zM479.9 250.5h3.6v1.6h-3.6zM479.9 262.5h3.6v1.6h-3.6zM479.9 274.5h3.6v1.6h-3.6zM479.9 286.5h3.6v1.6h-3.6zM479.9 298.5h3.6v1.6h-3.6zM479.9 310.5h3.6v1.6h-3.6zM479.9 322.5h3.6v1.6h-3.6zM479.9 334.5h3.6v1.6h-3.6zM479.9 346.5h3.6v1.6h-3.6zM479.9 358.5h3.6v1.6h-3.6zM479.9 370.5h3.6v1.6h-3.6zM479.9 382.5h3.6v1.6h-3.6zM479.9 394.5h3.6v1.6h-3.6zM479.9 406.5h3.6v1.6h-3.6zM479.9 418.5h3.6v1.6h-3.6zM479.9 430.5h3.6v1.6h-3.6zM479.9 442.5h3.6v1.6h-3.6zM479.9 454.5h3.6v1.6h-3.6zM479.9 466.5h3.6v1.6h-3.6zM479.9 478.5h3.6v1.6h-3.6zM479.9 490.5h3.6v1.6h-3.6zM479.9 502.5h3.6v1.6h-3.6zM479.9 514.5h3.6v1.6h-3.6zM479.9 526.5h3.6v1.6h-3.6zM479.9 538.5h3.6v1.6h-3.6zM479.9 550.5h3.6v1.6h-3.6zM479.9 562.5h3.6v1.6h-3.6zM479.9 574.5h3.6v1.6h-3.6zM479.9 586.5h3.6v1.6h-3.6zM479.9 598.5h3.6v1.6h-3.6zM479.9 610.5h3.6v1.6h-3.6z" fill="#e0e0e0"/>
<path d="M37.0 25h1.5v2.5h-1.5zM37.0 618.5h1.5v2.5h-1.5zM49.0 25h1.5v2.5h-1.5zM49.0 618.5h1.5v2.5h-1.5zM61.0 25h1.5v5.0h-1.5zM61.0 616.0h1.5v5.0h-1.5zM73.0 25h1.5v2.5h-1.5zM73.0 618.5h1.5v2.5h-1.5zM85.0 25h1.5v2.5h-1.5zM85.0 618.5h1.5v2.5h-1.5zM97.0 25h1.5v2.5h-1.5zM97.0 618.5h1.5v2.5h-1.5zM109.0 25h1.5v2.5h-1.5zM109.0 618.5h1.5v2.5h-1.5zM121.0 25h1.5v5.0h-1.5zM121.0 616.0h1.5v5.0h-1.5zM132.9 25h1.5v2.5h-1.5zM132.9 618.5h1.5v2.5h-1.5zM144.9 25h1.5v2.5h-1.5zM144.9 618.5h1.5v2.5h-1.5zM156.9 25h1.5v2.5h-1.5zM156.9 618.5h1.5v2.5h-1.5zM168.9 25h1.5v2.5h-1.5zM168.9 618.5h1.5v2.5h-1.5zM180.9 25h1.5v5.0h-1.5zM180.9 616.0h1.5v5.0h-1.5zM192.9 25h1.5v2.5h-1.5zM192.9 618.5h1.5v2.5h-1.5zM204.9 25h1.5v2.5h-1.5zM204.9 618.5h1.5v2.5h-1.5zM216.9 25h1.5v2.5h-1.5zM216.9 618.5h1.5v2.5h-1.5zM228.9 25h1.5v2.5h-1.5zM228.9 618.5h1.5v2.5h-1.5zM240.9 25h1.5v5.0h-1.5zM240.9 616.0h1.5v5.0h-1.5zM252.9 25h1.5v2.5h-1.5zM252.9 618.5h1.5v2.5h-1.5zM264.9 25h1.5v2.5h-1.5zM264.9 618.5h1.5v2.5h-1.5zM276.9 25h1.5v2.5h-1.5zM276.9 618.5h1.5v2.5h-1.5zM288.9 25h1.5v2.5h-1.5zM288.9 618.5h1.5v2.5h-1.5zM300.9 25h1.5v5.0h-1.5zM300.9 616.0h1.5v5.0h-1.5zM312.9 25h1.5v2.5h-1.5zM312.9 618.5h1.5v2.5h-1.5zM324.9 25h1.5v2.5h-1.5zM324.9 618.5h1.5v2.5h-1.5zM336.9 25h1.5v2.5h-1.5zM336.9 618.5h1.5v2.5h-1.5zM348.9 25h1.5v2.5h-1.5zM348.9 618.5h1.5v2.5h-1.5zM360.9 25h1.5v5.0h-1.5zM360.9 616.0h1.5v5.0h-1.5zM372.9 25h1.5v2.5h-1.5zM372.9 618.5h1.5v2.5h-1.5zM384.9 25h1.5v2.5h-1.5zM384.9 618.5h1.5v2.5h-1.5zM396.9 25h1.5v2.5h-1.5zM396.9 618.5h1.5v2.5h-1.5zM408.9 25h1.5v2.5h-1.5zM408.9 618.5h1.5v2.5h-1.5zM420.9 25h1.5v5.0h-1.5zM420.9 616.0h1.5v5.0h-1.5zM432.9 25h1.5v2.5h-1.5zM432.9 618.5h1.5v2.5h-1.5zM444.9 25h1.5v2.5h-1.5zM444.9 618.5h1.5v2.5h-1.5zM456.9 25h1.5v2.5h-1.5zM456.9 618.5h1.5v2.5h-1.5zM468.9 25h1.5v2.5h-1.5zM468.9 618.5h1.5v2.5h-1.5zM480.9 25h1.5v6.0h-1.5zM480.9 615.0h1.5v6.0h-1.5zM492.9 25h1.5v2.5h-1.5zM492.9 618.5h1.5v2.5h-1.5zM504.9 25h1.5v2.5h-1.5zM504.9 618.5h1.5v2.5h-1.5zM517.0 25h1.5v2.5h-1.5zM517.0 618.5h1.5v2.5h-1.5zM529.0 25h1.5v2.5h-1.5zM529.0 618.5h1.5v2.5h-1.5zM541.0 25h1.5v5.0h-1.5zM541.0 616.0h1.5v5.0h-1.5zM553.0 25h1.5v2.5h-1.5zM553.0 618.5h1.5v2.5h-1.5zM565.0 25h1.5v2.5h-1.5zM565.0 618.5h1.5v2.5h-1.5zM577.0 25h1.5v2.5h-1.5zM577.0 618.5h1.5v2.5h-1.5zM589.0 25h1.5v2.5h-1.5zM589.0 618.5h1.5v2.5h-1.5zM601.0 25h1.5v5.0h-1.5zM601.0 616.0h1.5v5.0h-1.5zM613.0 25h1.5v2.5h-1.5zM613.0 618.5h1.5v2.5h-1.5zM625.0 25h1.5v2.5h-1.5zM625.0 618.5h1.5v2.5h-1.5zM637.0 25h1.5v2.5h-1.5zM637.0 618.5h1.5v2.5h-1.5zM649.0 25h1.5v2.5h-1.5zM649.0 618.5h1.5v2.5h-1.5zM661.0 25h1.5v5.0h-1.5zM661.0 616.0h1.5v5.0h-1.5zM673.0 25h1.5v2.5h-1.5zM673.0 618.5h1.5v2.5h-1.5zM685.0 25h1.5v2.5h-1.5zM685.0 618.5h1.5v2.5h-1.5zM697.0 25h1.5v2.5h-1.5zM697.0 618.5h1.5v2.5h-1.5zM709.0 25h1.5v2.5h-1.5zM709.0 618.5h1.5v2.5h-1.5zM721.0 25h1.5v5.0h-1.5zM721.0 616.0h1.5v5.0h-1.5zM733.0 25h1.5v2.5h-1.5zM733.0 618.5h1.5v2.5h-1.5zM745.0 25h1.5v2.5h-1.5zM745.0 618.5h1.5v2.5h-1.5zM757.0 25h1.5v2.5h-1.5zM757.0 618.5h1.5v2.5h-1.5zM769.0 25h1.5v2.5h-1.5zM769.0 618.5h1.5v2.5h-1.5zM781.0 25h1.5v5.0h-1.5zM781.0 616.0h1.5v5.0h-1.5zM793.0 25h1.5v2.5h-1.5zM793.0 618.5h1.5v2.5h-1.5zM805.0 25h1.5v2.5h-1.5zM805.0 618.5h1.5v2.5h-1.5zM817.0 25h1.5v2.5h-1.5zM817.0 618.5h1.5v2.5h-1.5zM829.0 25h1.5v2.5h-1.5zM829.0 618.5h1.5v2.5h-1.5zM841.0 25h1.5v5.0h-1.5zM841.0 616.0h1.5v5.0h-1.5zM853.0 25h1.5v2.5h-1.5zM853.0 618.5h1.5v2.5h-1.5zM865.0 25h1.5v2.5h-1.5zM865.0 618.5h1.5v2.5h-1.5zM877.0 25h1.5v2.5h-1.5zM877.0 618.5h1.5v2.5h-1.5zM889.0 25h1.5v2.5h-1.5zM889.0 618.5h1.5v2.5h-1.5zM901.0 25h1.5v5.0h-1.5zM901.0 616.0h1.5v5.0h-1.5zM913.0 25h1.5v2.5h-1.5zM913.0 618.5h1.5v2.5h-1.5zM925.0 25h1.5v2.5h-1.5zM925.0 618.5h1.5v2.5h-1.5zM26 34.5h4.5v1.5h-4.5zM929.5 34.5h4.5v1.5h-4.5zM26 46.5h4.5v1.5h-4.5zM929.5 46.5h4.5v1.5h-4.5zM26 58.5h4.5v1.5h-4.5zM929.5 58.5h4.5v1.5h-4.5zM26 70.5h4.5v1.5h-4.5zM929.5 70.5h4.5v1.5h-4.5zM26 82.5h8.0v1.5h-8.0zM926.0 82.5h8.0v1.5h-8.0zM26 94.5h4.5v1.5h-4.5zM929.5 94.5h4.5v1.5h-4.5zM26 106.5h4.5v1.5h-4.5zM929.5 106.5h4.5v1.5h-4.5zM26 118.5h4.5v1.5h-4.5zM929.5 118.5h4.5v1.5h-4.5zM26 130.6h4.5v1.5h-4.5zM929.5 130.6h4.5v1.5h-4.5zM26 142.6h8.0v1.5h-8.0zM926.0 142.6h8.0v1.5h-8.0zM26 154.6h4.5v1.5h-4.5zM929.5 154.6h4.5v1.5h-4.5zM26 166.6h4.5v1.5h-4.5zM929.5 166.6h4.5v1.5h-4.5zM26 178.6h4.5v1.5h-4.5zM929.5 178.6h4.5v1.5h-4.5zM26 190.6h4.5v1.5h-4.5zM929.5 190.6h4.5v1.5h-4.5zM26 202.6h8.0v1.5h-8.0zM926.0 202.6h8.0v1.5h-8.0zM26 214.6h4.5v1.5h-4.5zM929.5 214.6h4.5v1.5h-4.5zM26 226.6h4.5v1.5h-4.5zM929.5 226.6h4.5v1.5h-4.5zM26 238.6h4.5v1.5h-4.5zM929.5 238.6h4.5v1.5h-4.5zM26 250.6h4.5v1.5h-4.5zM929.5 250.6h4.5v1.5h-4.5zM26 262.6h8.0v1.5h-8.0zM926.0 262.6h8.0v1.5h-8.0zM26 274.6h4.5v1.5h-4.5zM929.5 274.6h4.5v1.5h-4.5zM26 286.6h4.5v1.5h-4.5zM929.5 286.6h4.5v1.5h-4.5zM26 298.6h4.5v1.5h-4.5zM929.5 298.6h4.5v1.5h-4.5zM26 310.6h4.5v1.5h-4.5zM929.5 310.6h4.5v1.5h-4.5zM26 322.6h8.0v1.5h-8.0zM926.0 322.6h8.0v1.5h-8.0zM26 334.6h4.5v1.5h-4.5zM929.5 334.6h4.5v1.5h-4.5zM26 346.6h4.5v1.5h-4.5zM929.5 346.6h4.5v1.5h-4.5zM26 358.6h4.5v1.5h-4.5zM929.5 358.6h4.5v1.5h-4.5zM26 370.6h4.5v1.5h-4.5zM929.5 370.6h4.5v1.5h-4.5zM26 382.6h8.0v1.5h-8.0zM926.0 382.6h8.0v1.5h-8.0zM26 394.6h4.5v1.5h-4.5zM929.5 394.6h4.5v1.5h-4.5zM26 406.6h4.5v1.5h-4.5zM929.5 406.6h4.5v1.5h-4.5zM26 418.6h4.5v1.5h-4.5zM929.5 418.6h4.5v1.5h-4.5zM26 430.6h4.5v1.5h-4.5zM929.5 430.6h4.5v1.5h-4.5zM26 442.6h8.0v1.5h-8.0zM926.0 442.6h8.0v1.5h-8.0zM26 454.6h4.5v1.5h-4.5zM929.5 454.6h4.5v1.5h-4.5zM26 466.6h4.5v1.5h-4.5zM929.5 466.6h4.5v1.5h-4.5zM26 478.6h4.5v1.5h-4.5zM929.5 478.6h4.5v1.5h-4.5zM26 490.6h4.5v1.5h-4.5zM929.5 490.6h4.5v1.5h-4.5zM26 502.6h8.0v1.5h-8.0zM926.0 502.6h8.0v1.5h-8.0zM26 514.5h4.5v1.5h-4.5zM929.5 514.5h4.5v1.5h-4.5zM26 526.5h4.5v1.5h-4.5zM929.5 526.5h4.5v1.5h-4.5zM26 538.5h4.5v1.5h-4.5zM929.5 538.5h4.5v1.5h-4.5zM26 550.5h4.5v1.5h-4.5zM929.5 550.5h4.5v1.5h-4.5zM26 562.5h8.0v1.5h-8.0zM926.0 562.5h8.0v1.5h-8.0zM26 574.5h4.5v1.5h-4.5zM929.5 574.5h4.5v1.5h-4.5zM26 586.5h4.5v1.5h-4.5zM929.5 586.5h4.5v1.5h-4.5zM26 598.5h4.5v1.5h-4.5zM929.5 598.5h4.5v1.5h-4.5zM26 610.5h4.5v1.5h-4.5zM929.5 610.5h4.5v1.5h-4.5z" fill="#e8e8e8"/>
<path d="M461.8 23h1.8v598h-1.8zM581.8 23h1.8v598h-1.8z" fill="#2c082c"/>
<rect x="26" y="322.1" width="908" height="2.7" fill="#f0f000"/>
<path d="M27 319.6h1.2v2.5h-1.2zM29 319.6h1.2v2.5h-1.2zM31 324.8h1v2.5h-1zM33 320.6h1.2v1.5h-1.2zM37 324.8h1v2.5h-1zM39 319.6h1.2v2.5h-1.2zM41 324.8h1v2.5h-1zM43 324.8h1v2.5h-1zM47 320.6h1.2v1.5h-1.2zM51 324.8h1v2.5h-1zM53 320.6h1.2v1.5h-1.2zM55 319.6h1.2v2.5h-1.2zM57 320.6h1.2v1.5h-1.2zM61 319.6h1.2v2.5h-1.2zM71 319.6h1.2v2.5h-1.2zM73 320.6h1.2v1.5h-1.2zM77 320.6h1.2v1.5h-1.2zM79 324.8h1v2.0h-1zM83 319.6h1.2v2.5h-1.2zM87 320.1h1.2v2.0h-1.2zM91 324.8h1v2.0h-1zM107 320.1h1.2v2.0h-1.2zM117 319.6h1.2v2.5h-1.2zM119 320.6h1.2v1.5h-1.2zM121 319.6h1.2v2.5h-1.2zM125 320.6h1.2v1.5h-1.2zM127 320.6h1.2v1.5h-1.2zM129 320.1h1.2v2.0h-1.2zM135 319.6h1.2v2.5h-1.2zM139 319.6h1.2v2.5h-1.2zM141 320.1h1.2v2.0h-1.2zM143 324.8h1v1.5h-1zM145 320.6h1.2v1.5h-1.2zM147 319.6h1.2v2.5h-1.2zM149 320.6h1.2v1.5h-1.2zM153 320.1h1.2v2.0h-1.2zM155 320.6h1.2v1.5h-1.2zM159 320.1h1.2v2.0h-1.2zM165 320.1h1.2v2.0h-1.2zM169 319.6h1.2v2.5h-1.2zM173 319.6h1.2v2.5h-1.2zM175 319.6h1.2v2.5h-1.2zM179 320.1h1.2v2.0h-1.2zM181 320.1h1.2v2.0h-1.2zM183 324.8h1v2.5h-1zM185 320.1h1.2v2.0h-1.2zM189 320.1h1.2v2.0h-1.2zM195 319.6h1.2v2.5h-1.2zM197 320.1h1.2v2.0h-1.2zM201 319.6h1.2v2.5h-1.2zM203 320.1h1.2v2.0h-1.2zM205 320.6h1.2v1.5h-1.2zM209 320.1h1.2v2.0h-1.2zM211 320.1h1.2v2.0h-1.2zM213 319.6h1.2v2.5h-1.2zM215 320.1h1.2v2.0h-1.2zM217 320.1h1.2v2.0h-1.2zM221 320.1h1.2v2.0h-1.2zM223 320.6h1.2v1.5h-1.2zM229 319.6h1.2v2.5h-1.2zM231 320.1h1.2v2.0h-1.2zM233 320.6h1.2v1.5h-1.2zM239 319.6h1.2v2.5h-1.2zM241 320.1h1.2v2.0h-1.2zM245 320.6h1.2v1.5h-1.2zM247 319.6h1.2v2.5h-1.2zM253 324.8h1v1.5h-1zM257 320.6h1.2v1.5h-1.2zM259 319.6h1.2v2.5h-1.2zM261 320.1h1.2v2.0h-1.2zM263 319.6h1.2v2.5h-1.2zM265 319.6h1.2v2.5h-1.2zM267 320.6h1.2v1.5h-1.2zM269 319.6h1.2v2.5h-1.2zM273 320.1h1.2v2.0h-1.2zM277 319.6h1.2v2.5h-1.2zM279 320.1h1.2v2.0h-1.2zM281 320.6h1.2v1.5h-1.2zM283 324.8h1v2.5h-1zM287 319.6h1.2v2.5h-1.2zM289 319.6h1.2v2.5h-1.2zM291 324.8h1v2.5h-1zM297 324.8h1v1.5h-1zM305 320.6h1.2v1.5h-1.2zM307 319.6h1.2v2.5h-1.2zM309 324.8h1v1.5h-1zM317 319.6h1.2v2.5h-1.2zM319 319.6h1.2v2.5h-1.2zM321 319.6h1.2v2.5h-1.2zM323 319.6h1.2v2.5h-1.2zM325 319.6h1.2v2.5h-1.2zM327 320.6h1.2v1.5h-1.2zM329 319.6h1.2v2.5h-1.2zM331 324.8h1v1.5h-1zM333 320.6h1.2v1.5h-1.2zM335 320.6h1.2v1.5h-1.2zM337 320.1h1.2v2.0h-1.2zM345 319.6h1.2v2.5h-1.2zM349 320.1h1.2v2.0h-1.2zM351 319.6h1.2v2.5h-1.2zM353 324.8h1v2.0h-1zM355 320.1h1.2v2.0h-1.2zM359 320.6h1.2v1.5h-1.2zM363 320.6h1.2v1.5h-1.2zM365 320.6h1.2v1.5h-1.2zM369 319.6h1.2v2.5h-1.2zM371 324.8h1v1.5h-1zM373 320.1h1.2v2.0h-1.2zM375 320.1h1.2v2.0h-1.2zM379 320.6h1.2v1.5h-1.2zM383 320.6h1.2v1.5h-1.2zM385 324.8h1v2.5h-1zM393 320.1h1.2v2.0h-1.2zM399 320.6h1.2v1.5h-1.2zM403 320.1h1.2v2.0h-1.2zM409 319.6h1.2v2.5h-1.2zM411 320.6h1.2v1.5h-1.2zM413 319.6h1.2v2.5h-1.2zM415 319.6h1.2v2.5h-1.2zM417 320.1h1.2v2.0h-1.2zM419 320.6h1.2v1.5h-1.2zM425 319.6h1.2v2.5h-1.2zM429 320.1h1.2v2.0h-1.2zM439 324.8h1v2.0h-1zM447 319.6h1.2v2.5h-1.2zM451 324.8h1v1.5h-1zM455 320.6h1.2v1.5h-1.2zM461 320.6h1.2v1.5h-1.2zM463 320.6h1.2v1.5h-1.2zM465 320.6h1.2v1.5h-1.2zM477 319.6h1.2v2.5h-1.2zM479 324.8h1v2.5h-1zM481 319.6h1.2v2.5h-1.2zM487 320.1h1.2v2.0h-1.2zM491 320.6h1.2v1.5h-1.2zM493 320.6h1.2v1.5h-1.2zM497 324.8h1v2.5h-1zM501 320.1h1.2v2.0h-1.2zM507 324.8h1v1.5h-1zM509 320.6h1.2v1.5h-1.2zM513 319.6h1.2v2.5h-1.2zM517 319.6h1.2v2.5h-1.2zM523 324.8h1v2.0h-1zM525 320.1h1.2v2.0h-1.2zM529 320.6h1.2v1.5h-1.2zM531 324.8h1v2.0h-1zM535 324.8h1v2.0h-1zM541 320.6h1.2v1.5h-1.2zM543 319.6h1.2v2.5h-1.2zM545 320.6h1.2v1.5h-1.2zM549 324.8h1v2.0h-1zM563 320.1h1.2v2.0h-1.2zM565 324.8h1v2.0h-1zM567 319.6h1.2v2.5h-1.2zM569 320.1h1.2v2.0h-1.2zM571 324.8h1v1.5h-1zM573 319.6h1.2v2.5h-1.2zM575 324.8h1v2.5h-1zM577 319.6h1.2v2.5h-1.2zM583 324.8h1v2.0h-1zM587 320.1h1.2v2.0h-1.2zM593 320.6h1.2v1.5h-1.2zM601 320.6h1.2v1.5h-1.2zM605 320.6h1.2v1.5h-1.2zM609 319.6h1.2v2.5h-1.2zM617 320.6h1.2v1.5h-1.2zM619 320.1h1.2v2.0h-1.2zM621 320.6h1.2v1.5h-1.2zM623 320.1h1.2v2.0h-1.2zM627 320.1h1.2v2.0h-1.2zM629 324.8h1v2.5h-1zM633 320.1h1.2v2.0h-1.2zM635 320.1h1.2v2.0h-1.2zM637 324.8h1v1.5h-1zM643 324.8h1v1.5h-1zM645 324.8h1v1.5h-1zM649 320.1h1.2v2.0h-1.2zM651 319.6h1.2v2.5h-1.2zM655 319.6h1.2v2.5h-1.2zM657 320.1h1.2v2.0h-1.2zM661 319.6h1.2v2.5h-1.2zM669 320.1h1.2v2.0h-1.2zM673 324.8h1v1.5h-1zM677 324.8h1v1.5h-1zM685 319.6h1.2v2.5h-1.2zM689 320.1h1.2v2.0h-1.2zM695 319.6h1.2v2.5h-1.2zM697 320.1h1.2v2.0h-1.2zM703 320.1h1.2v2.0h-1.2zM707 324.8h1v2.0h-1zM713 320.6h1.2v1.5h-1.2zM717 324.8h1v2.5h-1zM719 320.6h1.2v1.5h-1.2zM721 320.1h1.2v2.0h-1.2zM723 320.6h1.2v1.5h-1.2zM725 319.6h1.2v2.5h-1.2zM727 319.6h1.2v2.5h-1.2zM731 320.1h1.2v2.0h-1.2zM735 320.6h1.2v1.5h-1.2zM737 320.6h1.2v1.5h-1.2zM739 319.6h1.2v2.5h-1.2zM741 320.6h1.2v1.5h-1.2zM747 319.6h1.2v2.5h-1.2zM749 320.1h1.2v2.0h-1.2zM753 319.6h1.2v2.5h-1.2zM755 319.6h1.2v2.5h-1.2zM757 320.1h1.2v2.0h-1.2zM761 324.8h1v1.5h-1zM765 320.1h1.2v2.0h-1.2zM767 320.1h1.2v2.0h-1.2zM769 320.1h1.2v2.0h-1.2zM775 319.6h1.2v2.5h-1.2zM779 320.1h1.2v2.0h-1.2zM785 319.6h1.2v2.5h-1.2zM787 324.8h1v2.5h-1zM789 319.6h1.2v2.5h-1.2zM791 319.6h1.2v2.5h-1.2zM793 320.6h1.2v1.5h-1.2zM795 324.8h1v2.0h-1zM797 319.6h1.2v2.5h-1.2zM799 319.6h1.2v2.5h-1.2zM805 320.1h1.2v2.0h-1.2zM811 320.6h1.2v1.5h-1.2zM815 320.1h1.2v2.0h-1.2zM819 324.8h1v2.0h-1zM821 324.8h1v2.0h-1zM823 320.1h1.2v2.0h-1.2zM827 319.6h1.2v2.5h-1.2zM831 320.6h1.2v1.5h-1.2zM835 320.6h1.2v1.5h-1.2zM841 320.6h1.2v1.5h-1.2zM843 324.8h1v1.5h-1zM847 320.6h1.2v1.5h-1.2zM851 320.1h1.2v2.0h-1.2zM855 324.8h1v2.0h-1zM857 320.1h1.2v2.0h-1.2zM859 320.1h1.2v2.0h-1.2zM861 324.8h1v2.5h-1zM863 320.6h1.2v1.5h-1.2zM865 324.8h1v1.5h-1zM869 320.1h1.2v2.0h-1.2zM871 320.1h1.2v2.0h-1.2zM875 320.6h1.2v1.5h-1.2zM879 320.1h1.2v2.0h-1.2zM881 320.1h1.2v2.0h-1.2zM883 324.8h1v1.5h-1zM885 320.6h1.2v1.5h-1.2zM889 324.8h1v2.5h-1zM891 320.6h1.2v1.5h-1.2zM895 320.6h1.2v1.5h-1.2zM897 320.6h1.2v1.5h-1.2zM899 320.1h1.2v2.0h-1.2zM901 319.6h1.2v2.5h-1.2zM905 320.6h1.2v1.5h-1.2zM907 320.6h1.2v1.5h-1.2zM913 320.1h1.2v2.0h-1.2zM915 324.8h1v1.5h-1zM917 320.6h1.2v1.5h-1.2zM919 320.6h1.2v1.5h-1.2zM925 320.1h1.2v2.0h-1.2zM931 324.8h1v2.5h-1z" fill="#f0f000" opacity="0.8"/>
<path d="M99.7 323h2.2v38.0h-2.2zM220.7 323h2.2v38.0h-2.2zM341.9 323h2.2v40.0h-2.2zM704.2 323h2.2v45.0h-2.2zM825.6 323h2.2v38.0h-2.2zM463.7 323h2.2v25.5h-2.2zM462.4 347h2.3v14h-2.3zM583.7 323h2.2v11.5h-2.2zM582.4 333.5h2.3v27.5h-2.3z" fill="#f0f000"/>
<path d="M461.9 22.6h1.5v2.5h-1.5zM461.9 27.3h1.5v2.5h-1.5zM461.9 32.0h1.5v2.5h-1.5zM461.9 36.7h1.5v2.5h-1.5zM461.9 41.4h1.5v2.5h-1.5zM461.9 46.1h1.5v2.5h-1.5zM461.9 50.8h1.5v2.5h-1.5zM461.9 55.5h1.5v2.5h-1.5zM461.9 60.2h1.5v2.5h-1.5zM461.9 64.9h1.5v2.5h-1.5zM461.9 69.6h1.5v2.5h-1.5zM461.9 74.3h1.5v2.5h-1.5zM461.9 79.0h1.5v2.5h-1.5zM461.9 83.7h1.5v2.5h-1.5zM461.9 88.4h1.5v2.5h-1.5zM461.9 93.1h1.5v2.5h-1.5zM461.9 97.8h1.5v2.5h-1.5zM461.9 102.5h1.5v2.5h-1.5zM461.9 107.2h1.5v2.5h-1.5zM461.9 111.9h1.5v2.5h-1.5zM461.9 116.6h1.5v2.5h-1.5zM461.9 121.3h1.5v2.5h-1.5zM461.9 126.0h1.5v2.5h-1.5zM461.9 130.7h1.5v2.5h-1.5zM461.9 135.4h1.5v2.5h-1.5zM461.9 140.1h1.5v2.5h-1.5zM461.9 144.8h1.5v2.5h-1.5zM461.9 149.5h1.5v2.5h-1.5zM461.9 154.2h1.5v2.5h-1.5zM461.9 158.9h1.5v2.5h-1.5zM461.9 163.6h1.5v2.5h-1.5zM461.9 168.3h1.5v2.5h-1.5zM461.9 173.0h1.5v2.5h-1.5zM461.9 177.7h1.5v2.5h-1.5zM461.9 182.4h1.5v2.5h-1.5zM461.9 187.1h1.5v2.5h-1.5zM461.9 191.8h1.5v2.5h-1.5zM461.9 196.5h1.5v2.5h-1.5zM461.9 201.2h1.5v2.5h-1.5zM461.9 205.9h1.5v2.5h-1.5zM461.9 210.6h1.5v2.5h-1.5zM461.9 215.3h1.5v2.5h-1.5zM461.9 220.0h1.5v2.5h-1.5zM461.9 224.7h1.5v2.5h-1.5zM461.9 229.4h1.5v2.5h-1.5zM461.9 234.1h1.5v2.5h-1.5zM461.9 238.8h1.5v2.5h-1.5zM461.9 243.5h1.5v2.5h-1.5zM461.9 248.2h1.5v2.5h-1.5zM461.9 252.9h1.5v2.5h-1.5zM461.9 257.6h1.5v2.5h-1.5zM461.9 262.3h1.5v2.5h-1.5zM461.9 267.0h1.5v2.5h-1.5zM461.9 271.7h1.5v2.5h-1.5zM461.9 276.4h1.5v2.5h-1.5zM461.9 281.1h1.5v2.5h-1.5zM461.9 285.8h1.5v2.5h-1.5zM461.9 290.5h1.5v2.5h-1.5zM461.9 295.2h1.5v2.5h-1.5zM461.9 299.9h1.5v2.5h-1.5zM461.9 304.6h1.5v2.5h-1.5zM461.9 309.3h1.5v2.5h-1.5zM461.9 314.0h1.5v2.5h-1.5zM461.9 318.7h1.5v2.5h-1.5zM461.9 323.4h1.5v2.5h-1.5zM461.9 328.1h1.5v2.5h-1.5zM461.9 332.8h1.5v2.5h-1.5zM461.9 337.5h1.5v2.5h-1.5zM461.9 342.2h1.5v2.5h-1.5zM461.9 346.9h1.5v2.5h-1.5zM461.9 351.6h1.5v2.5h-1.5zM461.9 356.3h1.5v2.5h-1.5zM461.9 361.0h1.5v2.5h-1.5zM461.9 365.7h1.5v2.5h-1.5zM461.9 370.4h1.5v2.5h-1.5zM461.9 375.1h1.5v2.5h-1.5zM461.9 379.8h1.5v2.5h-1.5zM461.9 384.5h1.5v2.5h-1.5zM461.9 389.2h1.5v2.5h-1.5zM461.9 393.9h1.5v2.5h-1.5zM461.9 398.6h1.5v2.5h-1.5zM461.9 403.3h1.5v2.5h-1.5zM461.9 408.0h1.5v2.5h-1.5zM461.9 412.7h1.5v2.5h-1.5zM461.9 417.4h1.5v2.5h-1.5zM461.9 422.1h1.5v2.5h-1.5zM461.9 426.8h1.5v2.5h-1.5zM461.9 431.5h1.5v2.5h-1.5zM461.9 436.2h1.5v2.5h-1.5zM461.9 440.9h1.5v2.5h-1.5zM461.9 445.6h1.5v2.5h-1.5zM461.9 450.3h1.5v2.5h-1.5zM461.9 455.0h1.5v2.5h-1.5zM461.9 459.7h1.5v2.5h-1.5zM461.9 464.4h1.5v2.5h-1.5zM461.9 469.1h1.5v2.5h-1.5zM461.9 473.8h1.5v2.5h-1.5zM461.9 478.5h1.5v2.5h-1.5zM461.9 483.2h1.5v2.5h-1.5zM461.9 487.9h1.5v2.5h-1.5zM461.9 492.6h1.5v2.5h-1.5zM461.9 497.3h1.5v2.5h-1.5zM461.9 502.0h1.5v2.5h-1.5zM461.9 506.7h1.5v2.5h-1.5zM461.9 511.4h1.5v2.5h-1.5zM461.9 516.1h1.5v2.5h-1.5zM461.9 520.8h1.5v2.5h-1.5zM461.9 525.5h1.5v2.5h-1.5zM461.9 530.2h1.5v2.5h-1.5zM461.9 534.9h1.5v2.5h-1.5zM461.9 539.6h1.5v2.5h-1.5zM461.9 544.3h1.5v2.5h-1.5zM461.9 549.0h1.5v2.5h-1.5zM461.9 553.7h1.5v2.5h-1.5zM461.9 558.4h1.5v2.5h-1.5zM461.9 563.1h1.5v2.5h-1.5zM461.9 567.8h1.5v2.5h-1.5zM461.9 572.5h1.5v2.5h-1.5zM461.9 577.2h1.5v2.5h-1.5zM461.9 581.9h1.5v2.5h-1.5zM461.9 586.6h1.5v2.5h-1.5zM461.9 591.3h1.5v2.5h-1.5zM461.9 596.0h1.5v2.5h-1.5zM461.9 600.7h1.5v2.5h-1.5zM461.9 605.4h1.5v2.5h-1.5zM461.9 610.1h1.5v2.5h-1.5zM461.9 614.8h1.5v2.5h-1.5zM461.9 619.5h1.5v2.5h-1.5zM582.0 22.6h1.5v2.5h-1.5zM582.0 27.3h1.5v2.5h-1.5zM582.0 32.0h1.5v2.5h-1.5zM582.0 36.7h1.5v2.5h-1.5zM582.0 41.4h1.5v2.5h-1.5zM582.0 46.1h1.5v2.5h-1.5zM582.0 50.8h1.5v2.5h-1.5zM582.0 55.5h1.5v2.5h-1.5zM582.0 60.2h1.5v2.5h-1.5zM582.0 64.9h1.5v2.5h-1.5zM582.0 69.6h1.5v2.5h-1.5zM582.0 74.3h1.5v2.5h-1.5zM582.0 79.0h1.5v2.5h-1.5zM582.0 83.7h1.5v2.5h-1.5zM582.0 88.4h1.5v2.5h-1.5zM582.0 93.1h1.5v2.5h-1.5zM582.0 97.8h1.5v2.5h-1.5zM582.0 102.5h1.5v2.5h-1.5zM582.0 107.2h1.5v2.5h-1.5zM582.0 111.9h1.5v2.5h-1.5zM582.0 116.6h1.5v2.5h-1.5zM582.0 121.3h1.5v2.5h-1.5zM582.0 126.0h1.5v2.5h-1.5zM582.0 130.7h1.5v2.5h-1.5zM582.0 135.4h1.5v2.5h-1.5zM582.0 140.1h1.5v2.5h-1.5zM582.0 144.8h1.5v2.5h-1.5zM582.0 149.5h1.5v2.5h-1.5zM582.0 154.2h1.5v2.5h-1.5zM582.0 158.9h1.5v2.5h-1.5zM582.0 163.6h1.5v2.5h-1.5zM582.0 168.3h1.5v2.5h-1.5zM582.0 173.0h1.5v2.5h-1.5zM582.0 177.7h1.5v2.5h-1.5zM582.0 182.4h1.5v2.5h-1.5zM582.0 187.1h1.5v2.5h-1.5zM582.0 191.8h1.5v2.5h-1.5zM582.0 196.5h1.5v2.5h-1.5zM582.0 201.2h1.5v2.5h-1.5zM582.0 205.9h1.5v2.5h-1.5zM582.0 210.6h1.5v2.5h-1.5zM582.0 215.3h1.5v2.5h-1.5zM582.0 220.0h1.5v2.5h-1.5zM582.0 224.7h1.5v2.5h-1.5zM582.0 229.4h1.5v2.5h-1.5zM582.0 234.1h1.5v2.5h-1.5zM582.0 238.8h1.5v2.5h-1.5zM582.0 243.5h1.5v2.5h-1.5zM582.0 248.2h1.5v2.5h-1.5zM582.0 252.9h1.5v2.5h-1.5zM582.0 257.6h1.5v2.5h-1.5zM582.0 262.3h1.5v2.5h-1.5zM582.0 267.0h1.5v2.5h-1.5zM582.0 271.7h1.5v2.5h-1.5zM582.0 276.4h1.5v2.5h-1.5zM582.0 281.1h1.5v2.5h-1.5zM582.0 285.8h1.5v2.5h-1.5zM582.0 290.5h1.5v2.5h-1.5zM582.0 295.2h1.5v2.5h-1.5zM582.0 299.9h1.5v2.5h-1.5zM582.0 304.6h1.5v2.5h-1.5zM582.0 309.3h1.5v2.5h-1.5zM582.0 314.0h1.5v2.5h-1.5zM582.0 318.7h1.5v2.5h-1.5zM582.0 323.4h1.5v2.5h-1.5zM582.0 328.1h1.5v2.5h-1.5zM582.0 332.8h1.5v2.5h-1.5zM582.0 337.5h1.5v2.5h-1.5zM582.0 342.2h1.5v2.5h-1.5zM582.0 346.9h1.5v2.5h-1.5zM582.0 351.6h1.5v2.5h-1.5zM582.0 356.3h1.5v2.5h-1.5zM582.0 361.0h1.5v2.5h-1.5zM582.0 365.7h1.5v2.5h-1.5zM582.0 370.4h1.5v2.5h-1.5zM582.0 375.1h1.5v2.5h-1.5zM582.0 379.8h1.5v2.5h-1.5zM582.0 384.5h1.5v2.5h-1.5zM582.0 389.2h1.5v2.5h-1.5zM582.0 393.9h1.5v2.5h-1.5zM582.0 398.6h1.5v2.5h-1.5zM582.0 403.3h1.5v2.5h-1.5zM582.0 408.0h1.5v2.5h-1.5zM582.0 412.7h1.5v2.5h-1.5zM582.0 417.4h1.5v2.5h-1.5zM582.0 422.1h1.5v2.5h-1.5zM582.0 426.8h1.5v2.5h-1.5zM582.0 431.5h1.5v2.5h-1.5zM582.0 436.2h1.5v2.5h-1.5zM582.0 440.9h1.5v2.5h-1.5zM582.0 445.6h1.5v2.5h-1.5zM582.0 450.3h1.5v2.5h-1.5zM582.0 455.0h1.5v2.5h-1.5zM582.0 459.7h1.5v2.5h-1.5zM582.0 464.4h1.5v2.5h-1.5zM582.0 469.1h1.5v2.5h-1.5zM582.0 473.8h1.5v2.5h-1.5zM582.0 478.5h1.5v2.5h-1.5zM582.0 483.2h1.5v2.5h-1.5zM582.0 487.9h1.5v2.5h-1.5zM582.0 492.6h1.5v2.5h-1.5zM582.0 497.3h1.5v2.5h-1.5zM582.0 502.0h1.5v2.5h-1.5zM582.0 506.7h1.5v2.5h-1.5zM582.0 511.4h1.5v2.5h-1.5zM582.0 516.1h1.5v2.5h-1.5zM582.0 520.8h1.5v2.5h-1.5zM582.0 525.5h1.5v2.5h-1.5zM582.0 530.2h1.5v2.5h-1.5zM582.0 534.9h1.5v2.5h-1.5zM582.0 539.6h1.5v2.5h-1.5zM582.0 544.3h1.5v2.5h-1.5zM582.0 549.0h1.5v2.5h-1.5zM582.0 553.7h1.5v2.5h-1.5zM582.0 558.4h1.5v2.5h-1.5zM582.0 563.1h1.5v2.5h-1.5zM582.0 567.8h1.5v2.5h-1.5zM582.0 572.5h1.5v2.5h-1.5zM582.0 577.2h1.5v2.5h-1.5zM582.0 581.9h1.5v2.5h-1.5zM582.0 586.6h1.5v2.5h-1.5zM582.0 591.3h1.5v2.5h-1.5zM582.0 596.0h1.5v2.5h-1.5zM582.0 600.7h1.5v2.5h-1.5zM582.0 605.4h1.5v2.5h-1.5zM582.0 610.1h1.5v2.5h-1.5zM582.0 614.8h1.5v2.5h-1.5zM582.0 619.5h1.5v2.5h-1.5z" fill="#9838a0"/>
<path d="M0.8 313.5H18L23 323.5L18 333.5H0.8Z" fill="#000" stroke="#f0f000" stroke-width="1.6"/>
<rect x="31.8" y="510.8" width="222.6" height="111.4" rx="4" fill="#000" stroke="#7aa6b0" stroke-width="2.2"/>
<path d="M41.4 529.6H52.8L47.1 523.4Z" fill="none" stroke="#d8d8d8" stroke-width="1.3" stroke-linejoin="round"/>
<path d="M65.4 555.8H76.8L71.1 549.6Z" fill="none" stroke="#d8d8d8" stroke-width="1.3" stroke-linejoin="round"/>
<rect x="144.5" y="0.8" width="95.8" height="21.8" rx="7.5" fill="#f00000"/>
<rect x="300" y="0" width="360" height="23" rx="11" fill="#000"/>
<rect x="312" y="9.9" width="337.5" height="1.9" fill="#c4cc30"/>
<path d="M352.9 2.2h3.8v2h-1.7V23h-2.1z" fill="#d4d4dc"/>
<path d="M606.2 2.2h-3.8v2h1.7V23h2.1z" fill="#d4d4dc"/>
<path d="M436 2.3h7l-2.6 2.6v2.3h-1.8v-2.3z" fill="#e020e0"/>
<rect x="671.8" y="0.5" width="129" height="22" rx="7.5" fill="#000"/>
<path d="M677.2 5.8Q677.2 4.3 678.7 4.3H689.8Q691.3 4.3 691.3 5.8V17.2Q684.2 21.8 677.2 17.2Z" fill="none" stroke="#8a40d8" stroke-width="1.9"/>
<path d="M679 8h10v2h-3.8v6.8h-2.2v-6.8h-4z" fill="#b848e8"/>
<rect x="820.5" y="0.5" width="71.3" height="22" rx="7.5" fill="#000"/>
<path d="M908.2 13.4L917.3 8.4L921.6 14.7L912.2 19.7Z" fill="#1846b0"/>
<path d="M910.6 13.9L916.8 10.6L919.4 14.3L913.1 17.5Z" fill="#3a3a60"/>
<path d="M909.6 14.2L912.6 18.4L919.8 14.7" fill="none" stroke="#e6c8d8" stroke-width="1.3"/>
<path d="M906.9 8.6Q906.9 5 910.8 4.2H915.9Q917 7.2 914.6 9.6L912.3 11.4L912.1 14.6H910.2L909.9 11.9Q906.9 11 906.9 8.6Z" fill="#48c83c"/>
<path d="M910.5 4.4H915.9Q916.8 7.2 914.6 9.4L912.4 11L911.2 8.4Z" fill="#22a818"/>
<circle cx="251.7" cy="625.5" r="2.6" fill="#3aa6dc"/>
<circle cx="251.7" cy="647.3" r="2.6" fill="#3aa6dc"/>
<circle cx="251.7" cy="671.8" r="2.6" fill="#3aa6dc"/>
<circle cx="381.6" cy="671.8" r="2.6" fill="#3aa6dc"/>
<rect x="1.7" y="624" width="248.4" height="22.3" rx="5" fill="#000"/>
<rect x="1.7" y="648.2" width="248.4" height="22.3" rx="5" fill="#000"/>
<rect x="253.3" y="623.5" width="126.7" height="47.2" rx="5" fill="#000"/>
<rect x="1.7" y="673.2" width="378.3" height="44.1" rx="5" fill="#000"/>
<circle cx="12.5" cy="637" r="9" fill="#f01010"/>
<circle cx="12.2" cy="660" r="9.3" fill="#f0f000"/>
<circle cx="11.8" cy="684.2" r="9.5" fill="#f0f000"/>
<circle cx="11.8" cy="706.4" r="9.5" fill="#f0f000"/>
<circle cx="202.1" cy="684.2" r="9.5" fill="#f0f000"/>
<circle cx="202.1" cy="707" r="9.5" fill="#f0f000"/>
<rect x="383.2" y="623.4" width="118.5" height="21.8" rx="10.5" fill="#000"/>
<rect x="797.8" y="623.4" width="154.8" height="21.6" rx="8" fill="#000"/>
<circle cx="810.5" cy="634.7" r="9.3" fill="#f0f000"/>
<path d="M822.5 641.8h8.5l4.2-15h10" stroke="#e0e0e0" stroke-width="1.5" fill="none"/>
<rect x="383" y="646" width="4" height="71" fill="#0058b0"/>
<rect x="386.5" y="648.5" width="108.5" height="68" rx="4" fill="#00307a"/>
<rect x="386.5" y="648.5" width="106" height="65.5" rx="4" fill="#5aacf2"/>
<rect x="388.5" y="650.5" width="104" height="63.5" rx="3" fill="#0282e2"/>
<rect x="716.5" y="648.8" width="108" height="68" rx="4" fill="#00307a"/>
<rect x="716.5" y="648.8" width="105.5" height="65" rx="4" fill="#5aacf2"/>
<rect x="718.5" y="650.8" width="103.5" height="63" rx="3" fill="#0282e2"/>
<rect x="409" y="685" width="60" height="24" fill="#e6e6e6"/>
</svg>
<div class="t" style="left:29.90px;top:6.40px;color:#001a5c;-webkit-text-stroke:0.45px currentColor">AKTAKOM</div>
<div class="t" style="left:168.20px;top:4.50px;color:#5c0000;-webkit-text-stroke:0.6px currentColor">Stop</div>
<div class="t" style="left:694.40px;top:6.60px;color:#e8e8e8">240.0ms</div>
<div class="t" style="left:831.60px;top:4.80px;color:#e8e8e8">9:18</div>
<div class="t" style="left:41.00px;top:517.25px;color:#e8e8e8"> x:0.200s</div>
<div class="t" style="left:40.80px;top:544.00px;color:#e8e8e8">1/ x:5.000HZ</div>
<div class="t" style="left:40.30px;top:571.50px;color:#e8e8e8">x1:-0.208s</div>
<div class="t" style="left:40.30px;top:598.10px;color:#e8e8e8">x2:-0.408s</div>
<div class="t" style="left:21.70px;top:630.60px;color:#c81818">5V-</div>
<div class="t" style="left:126.90px;top:630.20px;color:#c81818">0.00div</div>
<div class="t" style="left:21.70px;top:654.20px;color:#d8d800">2V-</div>
<div class="t" style="left:126.70px;top:654.60px;color:#d8d800">0.00div</div>
<div class="t" style="left:275.50px;top:628.00px;color:#e8e8e8">(5KS/s)</div>
<div class="t" style="left:261.40px;top:652.00px;color:#e8e8e8">Depth:10K</div>
<div class="t" style="left:25.00px;top:677.80px;color:#d8d800">F:  ?</div>
<div class="t" style="left:25.50px;top:700.50px;color:#d8d800">+D:  ?</div>
<div class="t" style="left:217.40px;top:677.40px;color:#d8d800">Vk:130.2mv</div>
<div class="t" style="left:217.40px;top:699.80px;color:#d8d800">V:-10.24mv</div>
<div class="t" style="left:399.60px;top:627.90px;color:#e8e8e8">M:100ms</div>
<div class="t" style="left:847.70px;top:628.50px;color:#e8e8e8">0.00mV</div>
<div class="t" style="left:416.00px;top:661.40px;color:#001a5c;-webkit-text-stroke:0.45px currentColor">Type</div>
<div class="t" style="left:409.90px;top:689.50px;color:#000">Image</div>
<div class="s" style="left:744.80px;top:673.20px">S</div>
<div class="s" style="left:756.80px;top:673.20px">a</div>
<div class="s" style="left:768.80px;top:673.20px">v</div>
<div class="s" style="left:780.80px;top:673.20px">e</div>
<div class="c" style="left:1.90px;top:628.20px">1</div>
<div class="c" style="left:1.60px;top:651.20px">2</div>
<div class="c" style="left:1.20px;top:675.40px">2</div>
<div class="c" style="left:1.20px;top:697.60px">2</div>
<div class="c" style="left:191.50px;top:675.40px">2</div>
<div class="c" style="left:191.50px;top:698.20px">2</div>
<div class="c" style="left:799.90px;top:625.90px">2</div>
<div class="c" style="left:0.2px;top:315.4px;color:#f0f000;font-size:18px;font-weight:normal">2</div>
</div></body></html>
